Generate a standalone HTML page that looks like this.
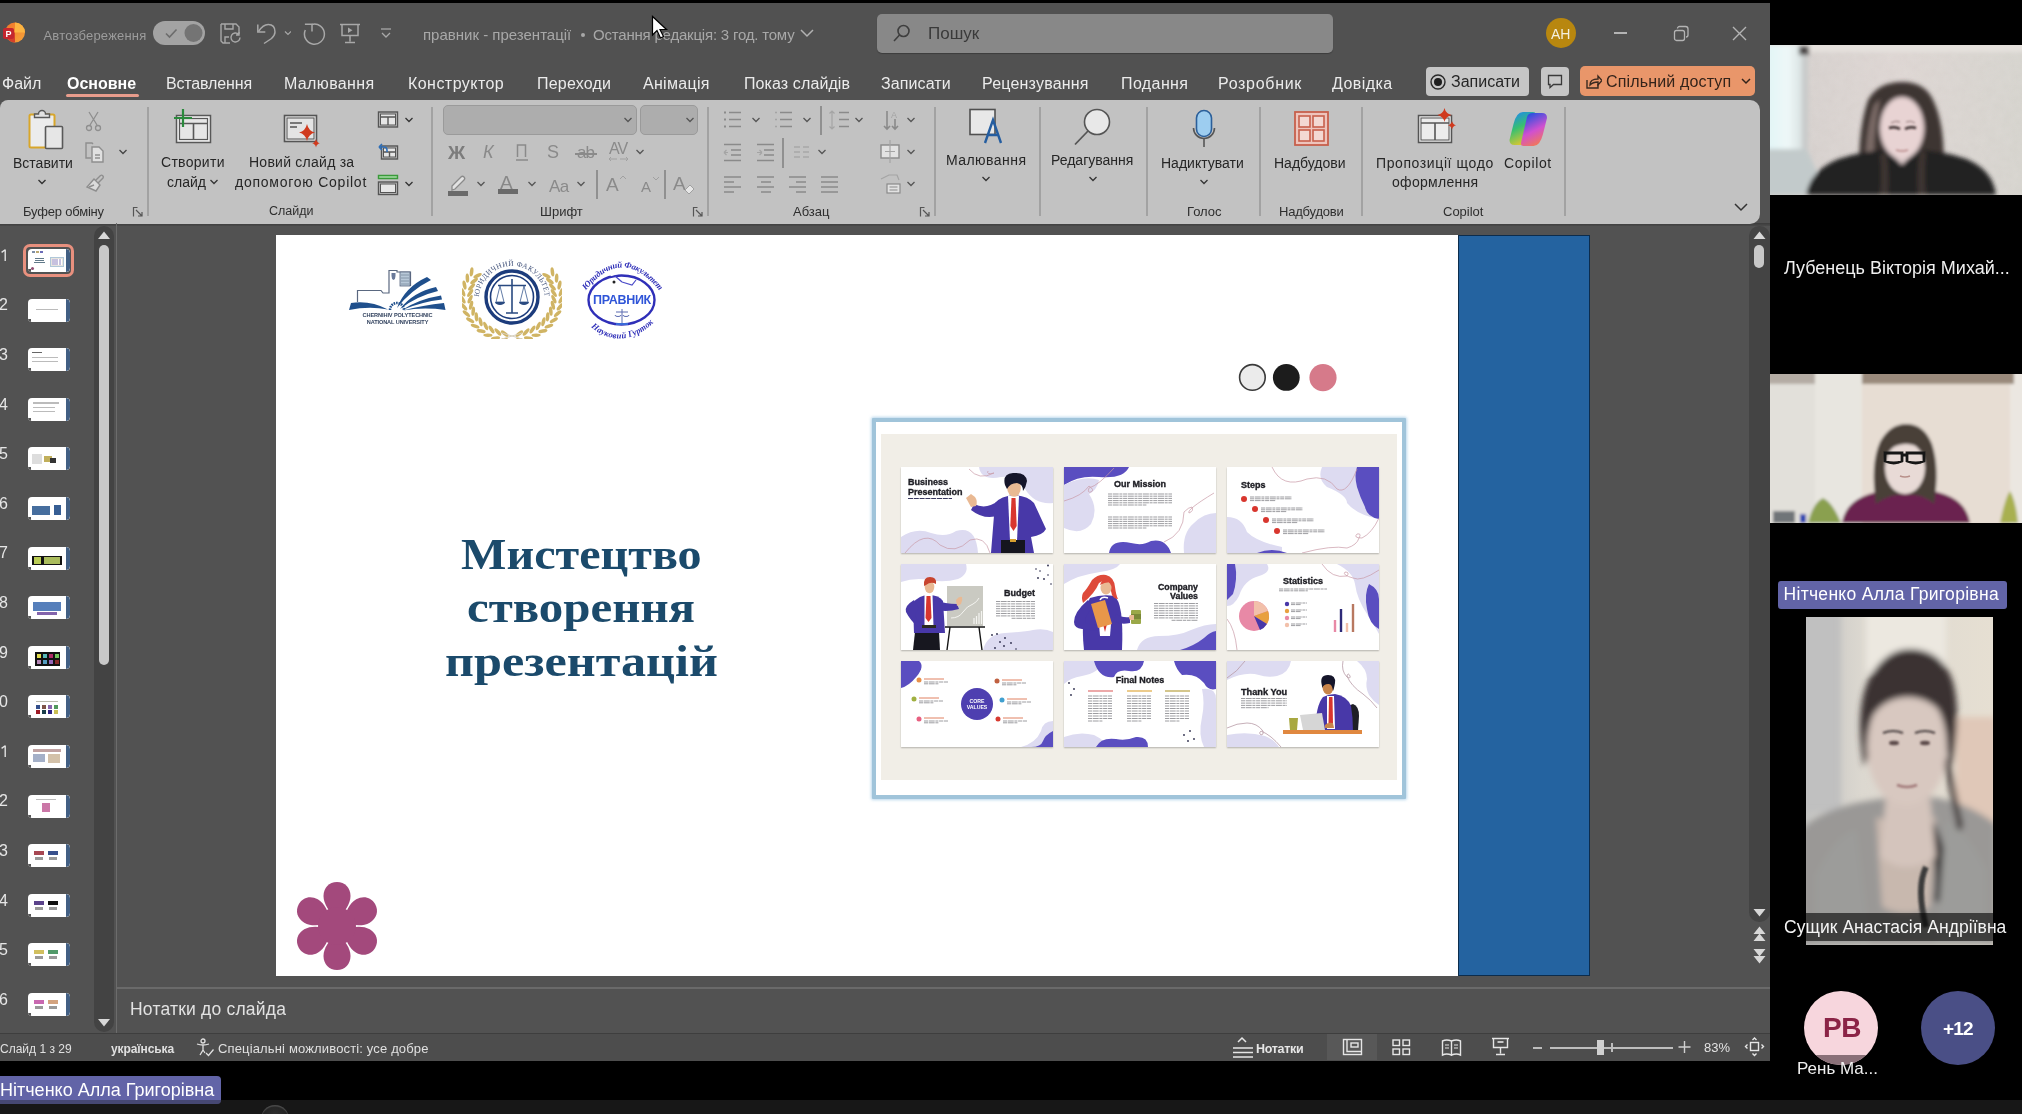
<!DOCTYPE html>
<html><head><meta charset="utf-8">
<style>
*{box-sizing:border-box;margin:0;padding:0}
html,body{width:2022px;height:1114px;overflow:hidden;background:#000;font-family:"Liberation Sans",sans-serif;position:relative}
.a{position:absolute}
.t{position:absolute;white-space:nowrap;line-height:1}
.tab{position:absolute;top:76px;font-size:16px;color:#ebebeb;white-space:nowrap;line-height:1}
.rl{position:absolute;font-size:14px;color:#262626;white-space:nowrap;line-height:1}
.gl{position:absolute;top:205px;font-size:13px;color:#2e2e2e;white-space:nowrap;line-height:1}
.sep{position:absolute;top:107px;width:2px;height:109px;background:#a2a2a2}
</style></head>
<body>
<div id="root" style="position:absolute;left:0;top:0;width:2022px;height:1114px;overflow:hidden;will-change:transform">
<!-- window background -->
<div class="a" style="left:0;top:3px;width:1770px;height:1058px;background:#525252"></div>
<!-- title bar -->
<div class="a" style="left:0;top:3px;width:1770px;height:97px;background:#515151"></div>
<!-- ribbon -->
<div class="a" style="left:0;top:223px;width:1770px;height:3px;background:linear-gradient(#3c3c3c,#4a4a4a)"></div>
<div class="a" style="left:0;top:100px;width:1760px;height:124px;background:#c2c2c2;border-radius:8px 10px 10px 0"></div>


<!-- ===== TITLE BAR CONTENT ===== -->
<svg class="a" style="left:2px;top:21px" width="24" height="23" viewBox="0 0 24 23">
  <defs><linearGradient id="pg" x1="0" y1="0" x2="1" y2="1"><stop offset="0" stop-color="#f0742a"/><stop offset="1" stop-color="#f7a43a"/></linearGradient></defs>
  <circle cx="13" cy="11.5" r="10" fill="url(#pg)"/>
  <path d="M13 1.5 A10 10 0 0 1 23 11.5 L13 11.5Z" fill="#fcb441"/>
  <path d="M3 11.5 A10 10 0 0 0 13 21.5 L13 11.5Z" fill="#d5402a"/>
  <rect x="1" y="7" width="11" height="11" rx="2" fill="#c4262e"/>
  <text x="6.5" y="16" font-family="Liberation Sans" font-weight="700" font-size="9" fill="#fff" text-anchor="middle">P</text>
</svg>
<div class="t" style="left:43.5px;top:28.5px;font-size:13px;color:#9c9c9c;letter-spacing:0.2px">Автозбереження</div>
<div class="a" style="left:153px;top:21px;width:52px;height:24px;border-radius:12px;background:#a3a3a3"></div>
<svg class="a" style="left:153px;top:21px" width="52" height="24"><path d="M13 12.5 l3.5 3.5 l7 -7.5" fill="none" stroke="#6c6c6c" stroke-width="1.6"/><circle cx="40.5" cy="12" r="9" fill="#747474"/></svg>
<svg class="a" style="left:218px;top:22px" width="26" height="24" viewBox="0 0 26 24" fill="none" stroke="#a8a8a8" stroke-width="1.4">
  <path d="M3 2 h15 l3 3 v7 M3 2 v17 l2 2 h7"/><path d="M7 2 v5 h8 v-5"/><path d="M7 21 v-6 h4"/>
  <path d="M22 15.5 a4.5 4.5 0 1 1 -1.3 -3.2 M21 10 v3 h-3"/>
</svg>
<svg class="a" style="left:255px;top:22px" width="36" height="24" fill="none" stroke="#a8a8a8" stroke-width="1.5">
  <path d="M2.8 2.5 v7.4 h7.5"/><path d="M3.5 9.5 Q8 2.5 13.3 2.5 Q20 2.5 20 9.9 Q20 13 16.5 16.5 L9 21.5"/>
  <path d="M30 9.5 l3 3 l3 -3" stroke-width="1.2"/>
</svg>
<svg class="a" style="left:301px;top:21px" width="26" height="26" fill="none" stroke="#a8a8a8" stroke-width="1.5">
  <path d="M3.9 3.3 H11 V10.4"/><path d="M11 3.4 A10 10 0 1 1 4.3 9"/>
</svg>
<svg class="a" style="left:338px;top:22px" width="24" height="24" fill="none" stroke="#a8a8a8" stroke-width="1.5">
  <path d="M2 2.5 h20 M4 2.5 v11 h16 v-11"/><path d="M12 13.5 v6 M7 20.5 h10"/><path d="M10 5.5 v5.5 l4.5 -2.75z" fill="#a8a8a8" stroke="none"/>
</svg>
<svg class="a" style="left:379px;top:26px" width="14" height="14" fill="none" stroke="#a8a8a8" stroke-width="1.3"><path d="M2 3 h10"/><path d="M3 7 l4 4 l4 -4"/></svg>
<div class="t" style="left:423px;top:27px;font-size:15px;color:#a8a8a8">правник - презентації</div>
<div class="a" style="left:580.5px;top:32.5px;width:4px;height:4px;border-radius:50%;background:#a8a8a8"></div>
<div class="t" style="left:593px;top:27px;font-size:15px;color:#a8a8a8;letter-spacing:-0.2px">Остання редакція: 3 год. тому</div>
<svg class="a" style="left:799px;top:27px" width="16" height="12" fill="none" stroke="#b2b2b2" stroke-width="1.5"><path d="M2 3 l6 6 l6 -6"/></svg>
<!-- search -->
<div class="a" style="left:877px;top:14px;width:456px;height:39px;border-radius:5px;background:#888888;box-shadow:0 1px 1px rgba(0,0,0,.25)"></div>
<svg class="a" style="left:891px;top:22px" width="22" height="22" fill="none" stroke="#3e3e3e" stroke-width="1.6"><circle cx="12.5" cy="9" r="5.5"/><path d="M8.5 13 l-5.5 6"/></svg>
<div class="t" style="left:928px;top:25px;font-size:17px;color:#3a3a3a">Пошук</div>
<!-- avatar + window buttons -->
<div class="a" style="left:1546px;top:18px;width:30px;height:30px;border-radius:50%;background:#b8870f"></div>
<div class="t" style="left:1551px;top:27px;font-size:14px;color:#f4f0e0">AH</div>
<div class="a" style="left:1614px;top:32px;width:13px;height:1.5px;background:#b4b4b4"></div>
<svg class="a" style="left:1672px;top:25px" width="18" height="17" fill="none" stroke="#b4b4b4" stroke-width="1.3"><rect x="2.5" y="5.5" width="10" height="10" rx="2"/><path d="M5.5 3.5 a2 2 0 0 1 2 -2 h6 a2.5 2.5 0 0 1 2.5 2.5 v6 a2 2 0 0 1 -2 2"/></svg>
<svg class="a" style="left:1731px;top:25px" width="17" height="17" fill="none" stroke="#b4b4b4" stroke-width="1.4"><path d="M2 2 L15 15 M15 2 L2 15"/></svg>

<!-- ===== TABS ===== -->
<div class="tab" style="left:2px">Файл</div>
<div class="tab" style="left:67px;font-weight:700;color:#fff">Основне</div>
<div class="a" style="left:66px;top:94px;width:73px;height:3px;border-radius:1.5px;background:#e89c8c"></div>
<div class="tab" style="left:166px;letter-spacing:-0.15px">Вставлення</div>
<div class="tab" style="left:284px;letter-spacing:0.35px">Малювання</div>
<div class="tab" style="left:408px;letter-spacing:0.45px">Конструктор</div>
<div class="tab" style="left:537px;letter-spacing:0.2px">Переходи</div>
<div class="tab" style="left:643px;letter-spacing:0.3px">Анімація</div>
<div class="tab" style="left:744px;letter-spacing:0.1px">Показ слайдів</div>
<div class="tab" style="left:881px;letter-spacing:0.1px">Записати</div>
<div class="tab" style="left:982px;letter-spacing:0.2px">Рецензування</div>
<div class="tab" style="left:1121px;letter-spacing:0.4px">Подання</div>
<div class="tab" style="left:1218px;letter-spacing:0.7px">Розробник</div>
<div class="tab" style="left:1332px;letter-spacing:0.45px">Довідка</div>
<!-- record / comment / share -->
<div class="a" style="left:1426px;top:67px;width:103px;height:29px;border-radius:4px;background:#c6c6c6"></div>
<svg class="a" style="left:1429px;top:73px" width="18" height="18"><circle cx="9" cy="9" r="7" fill="none" stroke="#2a2a2a" stroke-width="1.4"/><circle cx="9" cy="9" r="4" fill="#1e1e1e"/></svg>
<div class="t" style="left:1451px;top:74px;font-size:16px;color:#262626">Записати</div>
<div class="a" style="left:1541px;top:67px;width:28px;height:29px;border-radius:4px;background:#c6c6c6"></div>
<svg class="a" style="left:1546px;top:73px" width="18" height="18" fill="none" stroke="#3a3a3a" stroke-width="1.3"><path d="M2.5 2.5 h13 v9 h-8 l-3.5 3 v-3 h-1.5z"/></svg>
<div class="a" style="left:1580px;top:66px;width:175px;height:30px;border-radius:5px;background:#e9966a"></div>
<svg class="a" style="left:1584px;top:72px" width="18" height="18" fill="none" stroke="#3a2a20" stroke-width="1.4"><path d="M3 8 v8 h11 v-4"/><path d="M6 13 c0 -5 3 -6 8 -6 v-3 l4 4.5 l-4 4.5 v-3 c-4 0 -6 1 -8 3z"/></svg>
<div class="t" style="left:1606px;top:74px;font-size:16px;color:#33231a;letter-spacing:0.15px">Спільний доступ</div>
<svg class="a" style="left:1740px;top:76px" width="12" height="10" fill="none" stroke="#33231a" stroke-width="1.5"><path d="M2 3 l4 4 l4 -4"/></svg>


<!-- ===== RIBBON CONTENT ===== -->
<!-- clipboard -->
<svg class="a" style="left:26px;top:108px" width="40" height="42">
  <rect x="3.5" y="6.5" width="25" height="33" rx="1.5" fill="#ececec" stroke="#d8a62a" stroke-width="2"/>
  <path d="M8.5 9.5 v-3.5 h4 a3.5 3.5 0 0 1 7 0 h4 v3.5z" fill="#e2e2e2" stroke="#5a5a5a" stroke-width="1.4"/>
  <rect x="19.5" y="18.5" width="17" height="22" rx="1" fill="#e6e6e6" stroke="#595959" stroke-width="1.6"/>
</svg>
<div class="rl" style="left:13px;top:156px">Вставити</div>
<svg class="a" style="left:37px;top:178px" width="10" height="8" fill="none" stroke="#333" stroke-width="1.4"><path d="M1.5 2 l3.5 3.5 l3.5 -3.5"/></svg>
<svg class="a" style="left:85px;top:110px" width="17" height="22" fill="none" stroke="#8e8e8e" stroke-width="1.3">
  <path d="M4 2 L12 15 M13 2 L5 15"/><circle cx="4" cy="18" r="2.5"/><circle cx="13" cy="18" r="2.5"/>
</svg>
<svg class="a" style="left:83px;top:141px" width="23" height="23" fill="none" stroke="#8e8e8e" stroke-width="1.4">
  <path d="M8 17 h-5 v-15 h6 l1 1"/><path d="M9 6 h7 l4 4 v11 h-11z" fill="#e0e0e0"/><path d="M12 14 h5 M12 17 h5"/>
</svg>
<svg class="a" style="left:118px;top:148px" width="10" height="8" fill="none" stroke="#444" stroke-width="1.3"><path d="M1.5 2 l3.5 3.5 l3.5 -3.5"/></svg>
<svg class="a" style="left:84px;top:173px" width="22" height="21" fill="none" stroke="#8e8e8e" stroke-width="1.4">
  <path d="M14 10 l5 -5 a1.8 1.8 0 0 0 -2.5 -2.5 l-5 5"/><path d="M10 6 l6 6 l-4 6 l-9 -4z" fill="#dcdcdc"/><path d="M5 14 l5 -2"/>
</svg>
<div class="gl" style="left:23px;letter-spacing:-0.2px">Буфер обміну</div>
<svg class="a" style="left:132px;top:206px" width="12" height="12" fill="none" stroke="#555" stroke-width="1.2"><path d="M1.5 10.5 v-9 h4 M1.5 1.5 h0"/><path d="M4 4 l6 6 M10 6 v4 h-4"/></svg>
<div class="sep" style="left:147px"></div>

<!-- slides -->
<svg class="a" style="left:172px;top:108px" width="42" height="37">
  <rect x="4.5" y="7.5" width="34" height="27" fill="#f0f0f0" stroke="#585858" stroke-width="1.5"/>
  <rect x="7.5" y="10.5" width="28" height="21" fill="#e6e6e6" stroke="#585858" stroke-width="1.2"/>
  <path d="M7.5 15.5 h28 M21.5 15.5 v16" stroke="#585858" stroke-width="1.6"/>
  <path d="M11 1 v18 M2 10 h18" stroke="#2a8a3c" stroke-width="2.2"/>
</svg>
<div class="rl" style="left:161px;top:155px;letter-spacing:0.3px">Створити</div>
<div class="rl" style="left:167px;top:175px">слайд</div>
<svg class="a" style="left:209px;top:178px" width="10" height="8" fill="none" stroke="#333" stroke-width="1.3"><path d="M1.5 2 l3.5 3.5 l3.5 -3.5"/></svg>
<svg class="a" style="left:282px;top:113px" width="40" height="35">
  <rect x="2.5" y="2.5" width="32" height="26" fill="#e4e4e4" stroke="#555" stroke-width="1.6"/>
  <rect x="5" y="5" width="27" height="21" fill="none" stroke="#555" stroke-width="1"/>
  <path d="M8 10 h12 M8 14 h7" stroke="#555" stroke-width="1.6"/>
  <path d="M25 11 q1.5 7 8 8.5 q-6.5 1.5 -8 8.5 q-1.5 -7 -8 -8.5 q6.5 -1.5 8 -8.5z" fill="#d03a1e"/>
  <path d="M34 26 q.7 3.5 3.8 4.2 q-3.1 .7 -3.8 4.2 q-.7 -3.5 -3.8 -4.2 q3.1 -.7 3.8 -4.2z" fill="#d03a1e"/>
</svg>
<div class="rl" style="left:249px;top:155px;letter-spacing:0.25px">Новий слайд за</div>
<div class="rl" style="left:235px;top:175px;letter-spacing:0.75px">допомогою Copilot</div>
<svg class="a" style="left:376px;top:110px" width="24" height="19" fill="none" stroke="#555" stroke-width="1.4">
  <rect x="2.5" y="2" width="19" height="15"/><rect x="4.5" y="4" width="15" height="11" fill="#e6e6e6" stroke-width="1"/><path d="M4.5 7 h15 M12 7 v8"/>
</svg>
<svg class="a" style="left:404px;top:116px" width="10" height="8" fill="none" stroke="#333" stroke-width="1.3"><path d="M1.5 2 l3.5 3.5 l3.5 -3.5"/></svg>
<svg class="a" style="left:376px;top:142px" width="24" height="19" fill="none" stroke-width="1.4">
  <rect x="5.5" y="4" width="16" height="13" stroke="#555"/><rect x="7.5" y="6" width="12" height="9" fill="#e6e6e6" stroke="#555" stroke-width="1"/><path d="M7.5 10 h12 M13.5 10 v5" stroke="#555"/>
  <path d="M3 5 l3 -3 M3 5 l3 3 M3 5 h5 a3 3 0 0 1 3 3 v2" stroke="#2f6fb8" stroke-width="1.6"/>
</svg>
<svg class="a" style="left:376px;top:173px" width="24" height="23" fill="none" stroke-width="1.4">
  <path d="M2.5 2.5 h19 v3 h-19z" fill="#a8dca8" stroke="#3a9a3a"/>
  <rect x="2.5" y="9" width="19" height="12.5" stroke="#555"/><rect x="4.5" y="11" width="15" height="8.5" fill="#e6e6e6" stroke="#555" stroke-width="1"/>
</svg>
<svg class="a" style="left:404px;top:180px" width="10" height="8" fill="none" stroke="#333" stroke-width="1.3"><path d="M1.5 2 l3.5 3.5 l3.5 -3.5"/></svg>
<div class="gl" style="left:269px;font-size:12.5px">Слайди</div>
<div class="sep" style="left:431px"></div>

<!-- font -->
<div class="a" style="left:443px;top:105px;width:194px;height:30px;border-radius:5px;background:#adadad;border:1px solid #9a9a9a"></div>
<svg class="a" style="left:623px;top:116px" width="10" height="8" fill="none" stroke="#555" stroke-width="1.3"><path d="M1.5 2 l3.5 3.5 l3.5 -3.5"/></svg>
<div class="a" style="left:640px;top:105px;width:58px;height:30px;border-radius:5px;background:#adadad;border:1px solid #9a9a9a"></div>
<svg class="a" style="left:685px;top:116px" width="10" height="8" fill="none" stroke="#555" stroke-width="1.3"><path d="M1.5 2 l3.5 3.5 l3.5 -3.5"/></svg>
<div class="t" style="left:448px;top:143px;font-size:19px;font-weight:700;color:#7c7c7c">Ж</div>
<div class="t" style="left:483px;top:143px;font-size:18px;font-style:italic;color:#8a8a8a">К</div>
<svg class="a" style="left:514px;top:142px" width="16" height="20" fill="none" stroke="#8a8a8a" stroke-width="1.5"><path d="M3.5 15 v-12 h8 v12"/><path d="M2 18 h12"/></svg>
<div class="t" style="left:547px;top:143px;font-size:18px;color:#8a8a8a">S</div>
<div class="t" style="left:577px;top:144px;font-size:17px;color:#8a8a8a;letter-spacing:-1px">ab</div>
<div class="a" style="left:575px;top:153px;width:22px;height:1.5px;background:#8a8a8a"></div>
<div class="t" style="left:609px;top:141px;font-size:16px;color:#8a8a8a;letter-spacing:-1px">AV</div>
<svg class="a" style="left:608px;top:156px" width="22" height="6" fill="none" stroke="#a0a0a0" stroke-width="1"><path d="M1 3 h8 M1 3 l2 -2 M1 3 l2 2 M12 3 h8 M20 3 l-2 -2 M20 3 l-2 2"/></svg>
<svg class="a" style="left:635px;top:148px" width="10" height="8" fill="none" stroke="#555" stroke-width="1.3"><path d="M1.5 2 l3.5 3.5 l3.5 -3.5"/></svg>
<svg class="a" style="left:447px;top:174px" width="22" height="22">
  <path d="M5 12 l9 -9 a2 2 0 0 1 3 3 l-9 9 l-3 1z" fill="#e2e2e2" stroke="#8a8a8a" stroke-width="1.3"/>
  <rect x="1" y="17" width="20" height="5" fill="#6a6a6a"/>
</svg>
<svg class="a" style="left:476px;top:180px" width="10" height="8" fill="none" stroke="#555" stroke-width="1.3"><path d="M1.5 2 l3.5 3.5 l3.5 -3.5"/></svg>
<div class="t" style="left:500px;top:173px;font-size:19px;color:#888">A</div>
<div class="a" style="left:498px;top:189px;width:20px;height:5px;background:#6a6a6a"></div>
<svg class="a" style="left:527px;top:180px" width="10" height="8" fill="none" stroke="#555" stroke-width="1.3"><path d="M1.5 2 l3.5 3.5 l3.5 -3.5"/></svg>
<div class="t" style="left:549px;top:178px;font-size:17px;color:#8a8a8a;letter-spacing:-0.5px">Aa</div>
<svg class="a" style="left:576px;top:180px" width="10" height="8" fill="none" stroke="#555" stroke-width="1.3"><path d="M1.5 2 l3.5 3.5 l3.5 -3.5"/></svg>
<div class="a" style="left:596px;top:170px;width:1.5px;height:29px;background:#909090"></div>
<div class="t" style="left:606px;top:175px;font-size:19px;color:#8a8a8a">A</div>
<svg class="a" style="left:619px;top:175px" width="8" height="5" fill="none" stroke="#a0a0a0" stroke-width="1"><path d="M1 4 l3 -3 l3 3"/></svg>
<div class="t" style="left:641px;top:179px;font-size:15px;color:#8a8a8a">A</div>
<svg class="a" style="left:652px;top:176px" width="8" height="5" fill="none" stroke="#a0a0a0" stroke-width="1"><path d="M1 1 l3 3 l3 -3"/></svg>
<div class="a" style="left:664px;top:170px;width:1.5px;height:29px;background:#909090"></div>
<div class="t" style="left:673px;top:174px;font-size:19px;color:#8a8a8a">A</div>
<svg class="a" style="left:683px;top:183px" width="12" height="12"><path d="M2 7 l5 -5 l4 4 l-5 5z" fill="#e6e6e6" stroke="#a0a0a0" stroke-width="1"/></svg>
<div class="gl" style="left:540px">Шрифт</div>
<svg class="a" style="left:692px;top:206px" width="12" height="12" fill="none" stroke="#555" stroke-width="1.2"><path d="M1.5 10.5 v-9 h4"/><path d="M4 4 l6 6 M10 6 v4 h-4"/></svg>
<div class="sep" style="left:707px"></div>

<!-- paragraph -->
<svg class="a" style="left:721px;top:109px" width="200" height="86" fill="none" stroke="#8a8a8a" stroke-width="1.6">
  <!-- bullets -->
  <path d="M8 3.5 h12 M8 10.5 h12 M8 17.5 h12"/><path d="M3 3.5 h2 M3 10.5 h2 M3 17.5 h2" stroke-width="2"/>
  <!-- numbering -->
  <path d="M59 3.5 h12 M59 10.5 h12 M59 17.5 h12"/><path d="M54 3.5 h2 M54 10.5 h2 M54 17.5 h2" stroke-width="1.6" stroke="#a4a4a4"/>
  <!-- line spacing -->
  <path d="M118 3.5 h10 M118 10.5 h10 M118 17.5 h10"/><path d="M111 2 v18 M108.5 4.5 l2.5 -2.5 l2.5 2.5 M108.5 17.5 l2.5 2.5 l2.5 -2.5" stroke="#a4a4a4" stroke-width="1.2"/>
  <!-- text direction -->
  <path d="M166 2 v18 M163 17 l3 3 l3 -3 M174 10 v10 M171 17 l3 3 l3 -3"/><text x="170" y="9" font-size="9" fill="#a4a4a4" stroke="none" font-family="Liberation Sans">A</text>
  <!-- row 2 -->
  <path d="M3 35.5 h17 M10 41 h10 M10 46 h10 M3 51.5 h17"/><path d="M7 43.5 h-4 M3 43.5 l2.5 -2.5 M3 43.5 l2.5 2.5" stroke="#a4a4a4" stroke-width="1.2"/>
  <path d="M36 35.5 h17 M43 41 h10 M43 46 h10 M36 51.5 h17"/><path d="M36 43.5 h5 M41 43.5 l-2.5 -2.5 M41 43.5 l-2.5 2.5" stroke="#a4a4a4" stroke-width="1.2"/>
  <path d="M73 38 h6 M82 38 h6 M73 43 h6 M82 43 h6 M73 48 h6 M82 48 h6" stroke="#a8a8a8" stroke-width="1.4"/>
  <rect x="160" y="36" width="18" height="13" fill="#e2e2e2" stroke="#8a8a8a" stroke-width="1.4"/><path d="M169 31 v23 M164 42.5 h10" stroke="#a4a4a4" stroke-width="1.2"/>
  <!-- row 3 -->
  <path d="M3 68 h17 M3 73 h10 M3 78 h17 M3 83 h10"/>
  <path d="M36 68 h17 M40 73 h10 M36 78 h17 M40 83 h10"/>
  <path d="M68 68 h17 M75 73 h10 M68 78 h17 M75 83 h10"/>
  <path d="M100 68 h17 M100 73 h17 M100 78 h17 M100 83 h17"/>
  <path d="M160 70 l8 -4 h8 l2 5" stroke="#a4a4a4" stroke-width="1.2"/><rect x="166" y="75" width="13" height="9" fill="#e2e2e2" stroke="#8a8a8a" stroke-width="1.2"/><path d="M168.5 78 h8 M168.5 81 h8" stroke-width="1"/>
</svg>
<svg class="a" style="left:751px;top:116px" width="10" height="8" fill="none" stroke="#555" stroke-width="1.3"><path d="M1.5 2 l3.5 3.5 l3.5 -3.5"/></svg>
<svg class="a" style="left:802px;top:116px" width="10" height="8" fill="none" stroke="#555" stroke-width="1.3"><path d="M1.5 2 l3.5 3.5 l3.5 -3.5"/></svg>
<div class="a" style="left:820px;top:106px;width:1.5px;height:29px;background:#909090"></div>
<svg class="a" style="left:854px;top:116px" width="10" height="8" fill="none" stroke="#555" stroke-width="1.3"><path d="M1.5 2 l3.5 3.5 l3.5 -3.5"/></svg>
<svg class="a" style="left:906px;top:116px" width="10" height="8" fill="none" stroke="#555" stroke-width="1.3"><path d="M1.5 2 l3.5 3.5 l3.5 -3.5"/></svg>
<div class="a" style="left:782px;top:138px;width:1.5px;height:30px;background:#909090"></div>
<svg class="a" style="left:817px;top:148px" width="10" height="8" fill="none" stroke="#555" stroke-width="1.3"><path d="M1.5 2 l3.5 3.5 l3.5 -3.5"/></svg>
<svg class="a" style="left:906px;top:148px" width="10" height="8" fill="none" stroke="#555" stroke-width="1.3"><path d="M1.5 2 l3.5 3.5 l3.5 -3.5"/></svg>
<svg class="a" style="left:906px;top:180px" width="10" height="8" fill="none" stroke="#555" stroke-width="1.3"><path d="M1.5 2 l3.5 3.5 l3.5 -3.5"/></svg>
<div class="gl" style="left:793px">Абзац</div>
<svg class="a" style="left:919px;top:206px" width="12" height="12" fill="none" stroke="#555" stroke-width="1.2"><path d="M1.5 10.5 v-9 h4"/><path d="M4 4 l6 6 M10 6 v4 h-4"/></svg>
<div class="sep" style="left:934px"></div>

<!-- drawing -->
<svg class="a" style="left:967px;top:107px" width="40" height="40">
  <rect x="3" y="2.5" width="25" height="25" fill="#e8e8e8" stroke="#505050" stroke-width="1.6"/>
  <path d="M18 36 L26 13 L34 36 M21 28 h10" fill="none" stroke="#245da0" stroke-width="2.4"/>
</svg>
<div class="rl" style="left:946px;top:153px;letter-spacing:0.45px">Малювання</div>
<svg class="a" style="left:981px;top:175px" width="10" height="8" fill="none" stroke="#333" stroke-width="1.3"><path d="M1.5 2 l3.5 3.5 l3.5 -3.5"/></svg>
<div class="sep" style="left:1039px"></div>
<!-- editing -->
<svg class="a" style="left:1072px;top:107px" width="42" height="40">
  <circle cx="25" cy="15" r="12.5" fill="#e8e8e8" stroke="#555" stroke-width="1.6"/>
  <path d="M16 24 L3 37.5" stroke="#555" stroke-width="1.8"/>
</svg>
<div class="rl" style="left:1051px;top:153px">Редагування</div>
<svg class="a" style="left:1088px;top:175px" width="10" height="8" fill="none" stroke="#333" stroke-width="1.3"><path d="M1.5 2 l3.5 3.5 l3.5 -3.5"/></svg>
<div class="sep" style="left:1146px"></div>
<!-- voice -->
<svg class="a" style="left:1190px;top:108px" width="28" height="42">
  <rect x="6.5" y="2.5" width="15" height="26" rx="7.5" fill="#9dcdf0" stroke="#2b5f9a" stroke-width="1.6"/>
  <path d="M3.5 20 a10.5 10.5 0 0 0 21 0" fill="none" stroke="#555" stroke-width="1.6"/>
  <path d="M14 31 v8" stroke="#555" stroke-width="1.6"/>
</svg>
<div class="rl" style="left:1161px;top:156px">Надиктувати</div>
<svg class="a" style="left:1199px;top:178px" width="10" height="8" fill="none" stroke="#333" stroke-width="1.3"><path d="M1.5 2 l3.5 3.5 l3.5 -3.5"/></svg>
<div class="gl" style="left:1187px">Голос</div>
<div class="sep" style="left:1259px"></div>
<!-- add-ins -->
<svg class="a" style="left:1292px;top:109px" width="40" height="40">
  <rect x="3" y="3" width="33" height="33" fill="#eec4bc" stroke="#c7604c" stroke-width="1.8"/>
  <rect x="7" y="7" width="11" height="11" fill="#f3d8d2" stroke="#c7604c" stroke-width="1.6"/>
  <rect x="21" y="7" width="11" height="11" fill="#f3d8d2" stroke="#c7604c" stroke-width="1.6"/>
  <rect x="7" y="21" width="11" height="11" fill="#f3d8d2" stroke="#c7604c" stroke-width="1.6"/>
  <rect x="21" y="21" width="11" height="11" fill="#f3d8d2" stroke="#c7604c" stroke-width="1.6"/>
</svg>
<div class="rl" style="left:1274px;top:156px">Надбудови</div>
<div class="gl" style="left:1279px;letter-spacing:-0.2px">Надбудови</div>
<div class="sep" style="left:1361px"></div>
<!-- designer -->
<svg class="a" style="left:1416px;top:107px" width="42" height="38">
  <rect x="2.5" y="8.5" width="33" height="27" fill="#ececec" stroke="#555" stroke-width="1.5"/>
  <rect x="5" y="11" width="28" height="22" fill="none" stroke="#555" stroke-width="1"/>
  <path d="M5 16 h28 M19 16 v17" stroke="#555" stroke-width="1.6"/>
  <path d="M28.5 1 q1.2 5.5 7 7 q-5.8 1.5 -7 7 q-1.2 -5.5 -7 -7 q5.8 -1.5 7 -7z" fill="#d03a1e"/>
  <path d="M36 14 q.8 3.5 4 4.2 q-3.2 .7 -4 4.2 q-.8 -3.5 -4 -4.2 q3.2 -.7 4 -4.2z" fill="#d03a1e"/>
</svg>
<div class="rl" style="left:1376px;top:156px;letter-spacing:0.6px">Пропозиції щодо</div>
<div class="rl" style="left:1392px;top:175px;letter-spacing:0.3px">оформлення</div>
<!-- copilot -->
<svg class="a" style="left:1508px;top:110px" width="40" height="38" viewBox="0 0 40 38">
  <defs>
    <linearGradient id="cg1" x1="0.2" y1="0" x2="0.6" y2="1"><stop offset="0" stop-color="#1e88f0"/><stop offset=".45" stop-color="#38c070"/><stop offset="1" stop-color="#f0c828"/></linearGradient>
    <linearGradient id="cg2" x1="0.4" y1="0" x2="0.8" y2="1"><stop offset="0" stop-color="#2850e0"/><stop offset=".5" stop-color="#d050d0"/><stop offset="1" stop-color="#f88040"/></linearGradient>
  </defs>
  <path d="M15 2 h10 q3 0 2.5 3 l-6 26 q-1 4 -5 4 h-10 q-5 0 -5 -5 l4 -16 q3 -12 9.5 -12z" fill="url(#cg1)"/>
  <path d="M25 3 h9 q5 0 5 5 l-4 16 q-3 12 -9.5 12 h-10 q-3 0 -2.5 -3 l6 -26 q1 -4 6 -4z" fill="url(#cg2)"/>
</svg>
<div class="rl" style="left:1504px;top:156px;letter-spacing:0.6px">Copilot</div>
<div class="gl" style="left:1443px">Copilot</div>
<div class="sep" style="left:1564px"></div>
<svg class="a" style="left:1733px;top:201px" width="16" height="12" fill="none" stroke="#333" stroke-width="1.5"><path d="M2 3 l6 6 l6 -6"/></svg>

<!-- thumbnails panel scroll track -->
<div class="a" style="left:94px;top:226px;width:20px;height:806px;background:#434343;border-radius:10px"></div>
<div class="a" style="left:115.5px;top:223px;width:1.6px;height:810px;background:#6c6c6c"></div>

<!-- slide -->
<div class="a" style="left:276px;top:235px;width:1183px;height:741px;background:#fff"></div>
<div class="a" style="left:1458px;top:235px;width:132px;height:741px;background:#2463a0;border:1px solid #0c2c4c"></div>


<!-- ===== SLIDE CONTENT ===== -->
<!-- logo 1 -->
<svg class="a" style="left:345px;top:262px" width="106" height="66" viewBox="0 0 106 66">
  <path d="M12.5 40 V28.5 H36 L38 31 H44 V8.5 H52 V10 H65.5 V24" fill="none" stroke="#5a6880" stroke-width="1.2"/>
  <rect x="55" y="10" width="10" height="14" fill="#b8c8d8" stroke="#5a6880" stroke-width=".8"/>
  <path d="M56 13 h8 M56 16 h8 M56 19 h8 M56 22 h8" stroke="#7a8aa0" stroke-width=".8"/>
  <path d="M46.5 11 h4 v3 q0 3 -2 4 q-2 -1 -2 -4z" fill="#6a7a9a"/>
  <path d="M4 48 L6 41 Q25 38 43 47.5 Q24 44 4 48z" fill="#1f4f8c"/>
  <path d="M52 46 Q60 25 82 15 L86 18 Q66 28 52 46z" fill="#1f4f8c"/>
  <path d="M55 47 Q68 30 91 25 L93 29 Q72 34 55 47z" fill="#1f4f8c"/>
  <path d="M57 48 Q74 37 96 33.5 L97 37.5 Q76 40 57 48z" fill="#1f4f8c"/>
  <path d="M58 48.5 Q78 43 99 41 L100.5 48 Q78 45 58 48.5z" fill="#1f4f8c"/>
  <path d="M45 48 a7 7 0 0 1 14 0" fill="none" stroke="#1f4f8c" stroke-width="2.6" stroke-dasharray="1.6 .9"/>
  <text x="52.5" y="55" text-anchor="middle" font-family="Liberation Sans" font-weight="700" font-size="5.6" fill="#33435f" letter-spacing="-.1">CHERNIHIV POLYTECHNIC</text>
  <text x="52.5" y="62" text-anchor="middle" font-family="Liberation Sans" font-weight="700" font-size="5.6" fill="#33435f" letter-spacing="-.1">NATIONAL UNIVERSITY</text>
</svg>
<!-- logo 2 -->
<svg class="a" style="left:462px;top:255px" width="100" height="84" viewBox="0 0 100 84">
  <defs><path id="arc2" d="M17 44 A33 33 0 0 1 83 44"/></defs>
  <g fill="#d0b464">
    <g id="lfl"><ellipse cx="41.4" cy="85.0" rx="1.8" ry="4.6" transform="rotate(72 41.4 85.0)"/><ellipse cx="42.7" cy="78.6" rx="1.8" ry="4.6" transform="rotate(128 42.7 78.6)"/><ellipse cx="33.5" cy="83.2" rx="1.8" ry="4.6" transform="rotate(82 33.5 83.2)"/><ellipse cx="35.9" cy="77.0" rx="1.8" ry="4.6" transform="rotate(138 35.9 77.0)"/><ellipse cx="25.9" cy="80.2" rx="1.8" ry="4.6" transform="rotate(91 25.9 80.2)"/><ellipse cx="29.5" cy="74.5" rx="1.8" ry="4.6" transform="rotate(147 29.5 74.5)"/><ellipse cx="19.1" cy="76.1" rx="1.8" ry="4.6" transform="rotate(101 19.1 76.1)"/><ellipse cx="23.7" cy="71.0" rx="1.8" ry="4.6" transform="rotate(157 23.7 71.0)"/><ellipse cx="13.1" cy="71.1" rx="1.8" ry="4.6" transform="rotate(110 13.1 71.1)"/><ellipse cx="18.6" cy="66.7" rx="1.8" ry="4.6" transform="rotate(166 18.6 66.7)"/><ellipse cx="8.2" cy="65.2" rx="1.8" ry="4.6" transform="rotate(120 8.2 65.2)"/><ellipse cx="14.4" cy="61.8" rx="1.8" ry="4.6" transform="rotate(176 14.4 61.8)"/><ellipse cx="4.4" cy="58.7" rx="1.8" ry="4.6" transform="rotate(130 4.4 58.7)"/><ellipse cx="11.2" cy="56.2" rx="1.8" ry="4.6" transform="rotate(186 11.2 56.2)"/><ellipse cx="1.9" cy="51.8" rx="1.8" ry="4.6" transform="rotate(139 1.9 51.8)"/><ellipse cx="9.1" cy="50.3" rx="1.8" ry="4.6" transform="rotate(195 9.1 50.3)"/><ellipse cx="0.7" cy="44.5" rx="1.8" ry="4.6" transform="rotate(149 0.7 44.5)"/><ellipse cx="8.1" cy="44.2" rx="1.8" ry="4.6" transform="rotate(205 8.1 44.2)"/><ellipse cx="0.9" cy="37.2" rx="1.8" ry="4.6" transform="rotate(158 0.9 37.2)"/><ellipse cx="8.2" cy="38.0" rx="1.8" ry="4.6" transform="rotate(214 8.2 38.0)"/><ellipse cx="2.5" cy="30.1" rx="1.8" ry="4.6" transform="rotate(168 2.5 30.1)"/><ellipse cx="9.6" cy="31.9" rx="1.8" ry="4.6" transform="rotate(224 9.6 31.9)"/><ellipse cx="5.4" cy="23.2" rx="1.8" ry="4.6" transform="rotate(177 5.4 23.2)"/><ellipse cx="12.1" cy="26.0" rx="1.8" ry="4.6" transform="rotate(233 12.1 26.0)"/><ellipse cx="9.6" cy="16.9" rx="1.8" ry="4.6" transform="rotate(187 9.6 16.9)"/><ellipse cx="15.6" cy="20.7" rx="1.8" ry="4.6" transform="rotate(243 15.6 20.7)"/></g>
    <use href="#lfl" transform="translate(100 0) scale(-1 1)"/>
  </g>
  <path d="M40 78 L60 84 M60 78 L40 84" stroke="#d8d0c0" stroke-width="1"/>
  <text font-family="Liberation Serif" font-size="7.5" fill="#4a5a80" letter-spacing=".3"><textPath href="#arc2" startOffset="50%" text-anchor="middle">ЮРИДИЧНИЙ ФАКУЛЬТЕТ</textPath></text>
  <circle cx="50" cy="42" r="26" fill="#fff" stroke="#1c3c7c" stroke-width="3.4"/>
  <circle cx="50" cy="42" r="21.5" fill="none" stroke="#1c3c7c" stroke-width="1.6"/>
  <path d="M50 24 V58 M44 58 H56 M36 30.5 H64" stroke="#2a4a80" stroke-width="1.6"/>
  <path d="M38 31 L34 47 H42z M62 31 L58 47 H66z" fill="none" stroke="#3a5a90" stroke-width=".8"/>
  <path d="M33 47 a5 3 0 0 0 10 0z M57 47 a5 3 0 0 0 10 0z" fill="#2a4a80"/>
</svg>
<!-- logo 3 -->
<svg class="a" style="left:580px;top:258px" width="84" height="86" viewBox="0 0 84 86">
  <ellipse cx="41.5" cy="42" rx="33" ry="24.5" fill="none" stroke="#2f2fb8" stroke-width="2.4"/>
  <path d="M30 16 q10 -4 20 -3" stroke="#fff" stroke-width="5"/>
  <path d="M35 18 L42 24 M42 24 l10 3 l4 -5" fill="none" stroke="#4a4ac8" stroke-width="1.2"/>
  <circle cx="34" cy="24" r="1.5" fill="#222"/>
  <text x="42" y="46" text-anchor="middle" font-family="Liberation Sans" font-weight="700" font-size="12.5" fill="#2f55d8" letter-spacing="-.3">ПРАВНИК</text>
  <path d="M42 51 v14 M36 54 h12 M35 57 a3 1.5 0 0 0 6 0 M43 57 a3 1.5 0 0 0 6 0" fill="none" stroke="#5a6ab0" stroke-width="1"/>
  <path d="M36 66 h12" stroke="#3a6ad8" stroke-width="2"/>
  <defs><path id="ta3" d="M7 31 Q42 -12 78 31"/><path id="ba3" d="M10 62 Q41 92 74 58"/></defs><text font-family="Liberation Serif" font-style="italic" font-weight="700" font-size="8.6" fill="#2f2fb8" letter-spacing="-.2"><textPath href="#ta3" startOffset="50%" text-anchor="middle">Юридичний Факультет</textPath></text>
  <text font-family="Liberation Serif" font-style="italic" font-weight="700" font-size="8.6" fill="#2f2fb8" letter-spacing="-.2" dy="4.5"><textPath href="#ba3" startOffset="50%" text-anchor="middle">Науковий Гурток</textPath></text>
</svg>
<!-- title -->
<div class="t" style="left:460.5px;top:533px;font-family:'Liberation Serif',serif;font-weight:700;font-size:44px;color:#1b4a6b;transform-origin:0 0;transform:scaleX(1.094)">Мистецтво</div>
<div class="t" style="left:467px;top:586.4px;font-family:'Liberation Serif',serif;font-weight:700;font-size:44px;color:#1b4a6b;transform-origin:0 0;transform:scaleX(1.112)">створення</div>
<div class="t" style="left:444.5px;top:639.7px;font-family:'Liberation Serif',serif;font-weight:700;font-size:44px;color:#1b4a6b;transform-origin:0 0;transform:scaleX(1.142)">презентацій</div>
<!-- color dots -->
<svg class="a" style="left:1236px;top:362px" width="104" height="32">
  <circle cx="16.4" cy="15.4" r="12.8" fill="#ebebeb" stroke="#3a3a3a" stroke-width="1.6"/>
  <circle cx="50.3" cy="15.4" r="13.4" fill="#1c1c1c"/>
  <circle cx="87" cy="15.7" r="13.6" fill="#d67a8a"/>
</svg>
<!-- image frame -->
<div class="a" style="left:872px;top:418px;width:534px;height:381px;border:4.5px solid #a0c4da;border-radius:1px;background:#fff;box-shadow:0 0 3px 1px rgba(140,190,225,.6)"></div>
<div class="a" style="left:881px;top:434px;width:516px;height:346px;background:#f1eee7"></div>
<svg class="a" style="left:901px;top:467px;box-shadow:0 1px 1.5px rgba(0,0,0,.25)" width="152" height="86" viewBox="0 0 152 86"><rect width="152" height="86" fill="#fff"/>
<path d="M78 0 q2 14 22 10 q18 -2 24 12 q10 16 28 14 V0z" fill="#dddbf1"/>
<path d="M0 70 q15 -10 30 -4 q15 5 25 -2 q20 -6 22 22 H0z" fill="#dddbf1"/>
<path d="M68 2 q10 12 25 4 q-8 2 -6 -2 M4 86 q20 -25 35 -8 q15 10 30 -5 q15 -5 20 13" fill="none" stroke="#c99aa6" stroke-width="0.7"/>
<text x="7" y="18" font-family="Liberation Sans" font-weight="700" font-size="9" fill="#1e1e24" stroke="#1e1e24" stroke-width=".35">Business</text>
<text x="7" y="27.5" font-family="Liberation Sans" font-weight="700" font-size="9" fill="#1e1e24" stroke="#1e1e24" stroke-width=".35">Presentation</text>
<path d="M7 31.5 h44" stroke="#3a3a60" stroke-width="1" stroke-dasharray="5 .8"/>
<path d="M90 86 l4 -50 q6 -7 19 -8 q14 1 20 8 l12 26 q-3 6 -15 8 l3 16z" fill="#4838a8"/>
<path d="M97 34 q-12 9 -24 3 l-3 6 q14 11 29 5z" fill="#4838a8"/>
<path d="M65 31 l5 -4 l4 3 q3 4 1 9 l-5 1z" fill="#e9b993"/>
<path d="M107 29 h11 l-2 45 h-7z" fill="#fff"/>
<path d="M110.5 31 h4 l1.2 28 l-3.2 5 l-3.2 -5z" fill="#d8362e"/>
<ellipse cx="113" cy="21" rx="6.8" ry="8.8" fill="#e9b993"/>
<path d="M104 18 q-3 -11 8 -12 q13 -1 14 8 q-1 6 -4 10 q0 -7 -6 -8 q-7 0 -10 6z" fill="#15152a"/>
<path d="M100 86 v-13 h24 v13z" fill="#15151f"/><rect x="109" y="72" width="6" height="3" fill="#d8a030"/></svg>
<svg class="a" style="left:1064px;top:467px;box-shadow:0 1px 1.5px rgba(0,0,0,.25)" width="152" height="86" viewBox="0 0 152 86"><rect width="152" height="86" fill="#fff"/>
<path d="M0 0 h65 q-5 12 -30 10 q-20 -2 -35 8z" fill="#5a4ec0"/>
<path d="M0 18 q20 -10 35 -5 q-2 10 -10 14 q10 15 2 30 q-10 12 -27 4z" fill="#dddbf1"/>
<path d="M120 86 q-2 -20 10 -30 q10 -10 22 -10 V86z" fill="#dddbf1"/>
<path d="M45 86 q2 -14 22 -10 q12 3 20 -2 q15 -3 20 12z" fill="#5a4ec0"/>
<path d="M0 34 q18 -5 25 -15 q6 4 2 6 q-4 1 -2 -4 q10 -3 25 -20 M100 75 q20 -8 20 -30 q5 -5 8 -5 q2 4 -3 6 q-3 -3 25 -20" fill="none" stroke="#c99aa6" stroke-width="0.7"/>
<text x="76" y="20" text-anchor="middle" font-family="Liberation Sans" font-weight="700" font-size="9" fill="#1e1e24" stroke="#1e1e24" stroke-width=".35">Our Mission</text>
<path d="M44 27.0 h64.0" stroke="#5a5a62" stroke-width="0.6" stroke-dasharray="4 .7 6 .7 3 .7"/><path d="M44 29.2 h64.0" stroke="#5a5a62" stroke-width="0.6" stroke-dasharray="4 .7 6 .7 3 .7"/><path d="M44 31.4 h64.0" stroke="#5a5a62" stroke-width="0.6" stroke-dasharray="4 .7 6 .7 3 .7"/><path d="M44 33.6 h64.0" stroke="#5a5a62" stroke-width="0.6" stroke-dasharray="4 .7 6 .7 3 .7"/><path d="M44 35.8 h64.0" stroke="#5a5a62" stroke-width="0.6" stroke-dasharray="4 .7 6 .7 3 .7"/><path d="M44 38.0 h38.4" stroke="#5a5a62" stroke-width="0.6" stroke-dasharray="4 .7 6 .7 3 .7"/><path d="M44 50.0 h64.0" stroke="#5a5a62" stroke-width="0.6" stroke-dasharray="4 .7 6 .7 3 .7"/><path d="M44 52.2 h64.0" stroke="#5a5a62" stroke-width="0.6" stroke-dasharray="4 .7 6 .7 3 .7"/><path d="M44 54.4 h64.0" stroke="#5a5a62" stroke-width="0.6" stroke-dasharray="4 .7 6 .7 3 .7"/><path d="M44 56.6 h64.0" stroke="#5a5a62" stroke-width="0.6" stroke-dasharray="4 .7 6 .7 3 .7"/><path d="M44 58.8 h64.0" stroke="#5a5a62" stroke-width="0.6" stroke-dasharray="4 .7 6 .7 3 .7"/><path d="M44 61.0 h38.4" stroke="#5a5a62" stroke-width="0.6" stroke-dasharray="4 .7 6 .7 3 .7"/></svg>
<svg class="a" style="left:1227px;top:467px;box-shadow:0 1px 1.5px rgba(0,0,0,.25)" width="152" height="86" viewBox="0 0 152 86"><rect width="152" height="86" fill="#fff"/>
<path d="M95 0 q-5 12 5 20 q20 8 20 16 q10 12 32 16 V0z" fill="#dddbf1"/>
<path d="M130 0 h22 v52 q-12 -2 -14 -12 q-5 -10 -8 -20 q-3 -12 0 -20z" fill="#5a4ec0"/>
<path d="M0 50 q15 0 20 15 q10 10 35 15 V86 H0z" fill="#dddbf1"/>
<path d="M30 86 q15 -6 30 0z" fill="#5a4ec0"/>
<path d="M45 0 q10 22 35 12 q20 -5 30 10 q10 6 20 -20 M75 86 q30 -8 45 -5 q10 -3 12 -10 q3 -5 -2 -4 q-4 4 5 4 q10 -5 17 -20" fill="none" stroke="#c99aa6" stroke-width="0.7"/>
<text x="14" y="21" font-family="Liberation Sans" font-weight="700" font-size="9" fill="#1e1e24" stroke="#1e1e24" stroke-width=".35">Steps</text>
<circle cx="17" cy="32" r="3" fill="#d8362e"/><circle cx="28" cy="42" r="3" fill="#d8362e"/><circle cx="39" cy="53" r="3" fill="#d8362e"/><circle cx="50" cy="64" r="3" fill="#d8362e"/>
<path d="M23 30.0 h42.0" stroke="#5a5a62" stroke-width="0.6" stroke-dasharray="4 .7 6 .7 3 .7"/><path d="M23 31.8 h42.0" stroke="#5a5a62" stroke-width="0.6" stroke-dasharray="4 .7 6 .7 3 .7"/><path d="M23 33.6 h25.2" stroke="#5a5a62" stroke-width="0.6" stroke-dasharray="4 .7 6 .7 3 .7"/><path d="M34 41.0 h42.0" stroke="#5a5a62" stroke-width="0.6" stroke-dasharray="4 .7 6 .7 3 .7"/><path d="M34 42.8 h42.0" stroke="#5a5a62" stroke-width="0.6" stroke-dasharray="4 .7 6 .7 3 .7"/><path d="M34 44.6 h25.2" stroke="#5a5a62" stroke-width="0.6" stroke-dasharray="4 .7 6 .7 3 .7"/><path d="M45 52.0 h42.0" stroke="#5a5a62" stroke-width="0.6" stroke-dasharray="4 .7 6 .7 3 .7"/><path d="M45 53.8 h42.0" stroke="#5a5a62" stroke-width="0.6" stroke-dasharray="4 .7 6 .7 3 .7"/><path d="M45 55.6 h25.2" stroke="#5a5a62" stroke-width="0.6" stroke-dasharray="4 .7 6 .7 3 .7"/><path d="M56 63.0 h42.0" stroke="#5a5a62" stroke-width="0.6" stroke-dasharray="4 .7 6 .7 3 .7"/><path d="M56 64.8 h42.0" stroke="#5a5a62" stroke-width="0.6" stroke-dasharray="4 .7 6 .7 3 .7"/><path d="M56 66.6 h25.2" stroke="#5a5a62" stroke-width="0.6" stroke-dasharray="4 .7 6 .7 3 .7"/></svg>
<svg class="a" style="left:901px;top:564px;box-shadow:0 1px 1.5px rgba(0,0,0,.25)" width="152" height="86" viewBox="0 0 152 86"><rect width="152" height="86" fill="#fff"/>
<path d="M0 0 h65 q3 10 -8 15 q-14 4 -28 1 q-15 -3 -29 2z" fill="#dddbf1"/>
<path d="M82 86 q4 -16 22 -17 q18 -1 28 -3 q12 -2 20 2 V86z" fill="#dddbf1"/>
<rect x="46" y="22" width="36" height="40" fill="#cacac2"/>
<path d="M50 54 q8 0 12 -6 q4 -6 10 -8 q4 -2 6 -6" fill="none" stroke="#f4f4f0" stroke-width="1"/>
<path d="M73 60 v-6 M75.5 60 v-8 M78 60 v-11 M80.5 60 v-13" stroke="#f4f4f0" stroke-width="1.2"/>
<path d="M44 63 h40 M49 63 l-3 23 M78 63 l3 23" stroke="#141414" stroke-width="1.4"/>
<path d="M12 86 l2 -18 h24 l1 18z" fill="#17171f"/>
<path d="M13 69 l-1 -30 q6 -8 16 -8 q10 0 14 6 l2 32z" fill="#4838a8"/>
<path d="M34 36 q10 4 22 4 l2 5 q-14 4 -26 0z" fill="#4838a8"/>
<path d="M13 36 q-10 6 -8 12 q4 8 12 15 l3 -3 q-6 -6 -6 -10 l4 -6z" fill="#4838a8"/>
<path d="M55 36 q3 -4 6 -3 q1 3 -1 7 l-4 2z" fill="#e9b993"/>
<path d="M23.5 31 h8 l1 31 h-9z" fill="#fff"/>
<path d="M25.5 32 h4 l1 22 l-3 4 l-3 -4z" fill="#d8362e"/>
<rect x="21" y="61" width="14" height="3" fill="#2a2a20"/>
<ellipse cx="28.5" cy="23" rx="4.8" ry="6.2" fill="#e9b993"/>
<path d="M23 22 q-1 -9 6 -9 q7 0 6 7 q-5 -3 -10 1z" fill="#c8442e"/>
<text x="134" y="31.5" text-anchor="end" font-family="Liberation Sans" font-weight="700" font-size="9" fill="#1e1e24" stroke="#1e1e24" stroke-width=".35">Budget</text>
<path d="M95.0 37.5 h39.0" stroke="#5a5a62" stroke-width="0.6" stroke-dasharray="4 .7 6 .7 3 .7"/><path d="M95.0 39.9 h39.0" stroke="#5a5a62" stroke-width="0.6" stroke-dasharray="4 .7 6 .7 3 .7"/><path d="M95.0 42.3 h39.0" stroke="#5a5a62" stroke-width="0.6" stroke-dasharray="4 .7 6 .7 3 .7"/><path d="M95.0 44.7 h39.0" stroke="#5a5a62" stroke-width="0.6" stroke-dasharray="4 .7 6 .7 3 .7"/><path d="M95.0 47.1 h39.0" stroke="#5a5a62" stroke-width="0.6" stroke-dasharray="4 .7 6 .7 3 .7"/><path d="M95.0 49.5 h39.0" stroke="#5a5a62" stroke-width="0.6" stroke-dasharray="4 .7 6 .7 3 .7"/><path d="M95.0 51.9 h39.0" stroke="#5a5a62" stroke-width="0.6" stroke-dasharray="4 .7 6 .7 3 .7"/><path d="M110.6 54.3 h23.4" stroke="#5a5a62" stroke-width="0.6" stroke-dasharray="4 .7 6 .7 3 .7"/>
<g fill="#2a2a4a"><circle cx="147" cy="1.5" r=".9"/><circle cx="135" cy="5" r=".8"/><circle cx="139" cy="7" r=".8"/><circle cx="147" cy="11" r=".8"/><circle cx="137" cy="14" r=".9"/><circle cx="143" cy="15" r=".9"/><circle cx="150" cy="20" r=".8"/>
<circle cx="91" cy="71" r=".9"/><circle cx="96" cy="70" r=".9"/><circle cx="104" cy="74" r=".9"/><circle cx="99" cy="78" r=".9"/><circle cx="103" cy="82" r=".9"/><circle cx="110" cy="79" r=".9"/><circle cx="94" cy="84" r=".9"/><circle cx="115" cy="85" r=".8"/></g></svg>
<svg class="a" style="left:1064px;top:564px;box-shadow:0 1px 1.5px rgba(0,0,0,.25)" width="152" height="86" viewBox="0 0 152 86"><rect width="152" height="86" fill="#fff"/>
<path d="M0 0 h56 q-4 6 -20 8 q-22 3 -36 12z" fill="#dddbf1"/>
<path d="M73 86 q4 -14 22 -14 q20 0 32 -6 q14 -6 25 -6 V86z" fill="#dddbf1"/>
<path d="M116 86 q14 -4 24 -12 q6 -6 12 -7 V86z" fill="#5a4ec0"/>
<path d="M22 86 l1 -14 h32 l1 14z" fill="#17171f"/>
<path d="M20 86 q-4 -36 6 -52 q12 -4 24 -2 q10 6 8 54z" fill="#4838a8"/>
<path d="M24 36 q-14 12 -14 22 q0 6 8 7 l16 2 l1 -5 l-14 -3 q0 -8 8 -16z" fill="#4838a8"/>
<path d="M52 50 q6 4 14 3 v6 q-10 2 -16 -2z" fill="#4838a8"/>
<path d="M35 60 h12 l-1 12 h-10z" fill="#fff"/><path d="M39 60 h4 l-2 8z" fill="#d8362e"/>
<path d="M27 40 l14 -4 l7 24 l-14 4z" fill="#e8974a"/>
<path d="M36 36 q2 -4 8 -2" stroke="#fff" stroke-width="1.5" fill="none"/>
<path d="M28 16 q6 -6 14 -5 q8 2 9 12 q1 8 3 12 q-4 0 -6 -4 l-3 -12 q-4 -4 -10 0 q-4 10 -16 20 q-2 -6 0 -10 q4 -4 9 -13z" fill="#de4a3a"/>
<ellipse cx="42" cy="24" rx="5.5" ry="6.5" fill="#e9b993"/>
<path d="M36 21 q2 -7 8 -6 q4 1 5 4 q-6 -2 -13 2z" fill="#de4a3a"/>
<rect x="67" y="46" width="10" height="14" rx="1" fill="#9aa848"/><rect x="67" y="50" width="10" height="5" fill="#7a8838"/>
<path d="M66 56 q-2 -3 0 -5 h4 v5z" fill="#e9b993"/>
<text x="134" y="25.5" text-anchor="end" font-family="Liberation Sans" font-weight="700" font-size="8.8" fill="#1e1e24" stroke="#1e1e24" stroke-width=".35">Company</text>
<text x="134" y="35" text-anchor="end" font-family="Liberation Sans" font-weight="700" font-size="8.8" fill="#1e1e24" stroke="#1e1e24" stroke-width=".35">Values</text>
<path d="M90.0 39.5 h44.0" stroke="#5a5a62" stroke-width="0.6" stroke-dasharray="4 .7 6 .7 3 .7"/><path d="M90.0 41.9 h44.0" stroke="#5a5a62" stroke-width="0.6" stroke-dasharray="4 .7 6 .7 3 .7"/><path d="M90.0 44.3 h44.0" stroke="#5a5a62" stroke-width="0.6" stroke-dasharray="4 .7 6 .7 3 .7"/><path d="M90.0 46.7 h44.0" stroke="#5a5a62" stroke-width="0.6" stroke-dasharray="4 .7 6 .7 3 .7"/><path d="M90.0 49.1 h44.0" stroke="#5a5a62" stroke-width="0.6" stroke-dasharray="4 .7 6 .7 3 .7"/><path d="M90.0 51.5 h44.0" stroke="#5a5a62" stroke-width="0.6" stroke-dasharray="4 .7 6 .7 3 .7"/><path d="M90.0 53.9 h44.0" stroke="#5a5a62" stroke-width="0.6" stroke-dasharray="4 .7 6 .7 3 .7"/><path d="M107.6 56.3 h26.4" stroke="#5a5a62" stroke-width="0.6" stroke-dasharray="4 .7 6 .7 3 .7"/></svg>
<svg class="a" style="left:1227px;top:564px;box-shadow:0 1px 1.5px rgba(0,0,0,.25)" width="152" height="86" viewBox="0 0 152 86"><rect width="152" height="86" fill="#fff"/>
<path d="M0 0 h40 q5 8 -8 12 q-15 4 -20 20 q-5 10 -12 10z" fill="#dddbf1"/>
<path d="M0 0 h8 q3 15 -2 30 l-6 6z" fill="#5a4ec0"/>
<path d="M110 0 h42 v70 q-5 -10 -12 -20 q-10 -15 -12 -30 q-2 -12 -18 -20z" fill="#dddbf1"/>
<path d="M142 20 q10 5 10 15 v30 q-10 -5 -12 -20 q-3 -15 2 -25z" fill="#5a4ec0"/>
<path d="M0 55 q8 10 10 31 M95 0 q10 15 25 12 q3 -4 -2 -4 q-3 3 8 6 q8 4 26 -8" fill="none" stroke="#c99aa6" stroke-width="0.7"/>
<text x="76" y="20" text-anchor="middle" font-family="Liberation Sans" font-weight="700" font-size="9" fill="#1e1e24" stroke="#1e1e24" stroke-width=".35">Statistics</text>
<path d="M52 25.0 h48.0" stroke="#5a5a62" stroke-width="0.6" stroke-dasharray="4 .7 6 .7 3 .7"/><path d="M52 26.8 h28.8" stroke="#5a5a62" stroke-width="0.6" stroke-dasharray="4 .7 6 .7 3 .7"/>
<circle cx="27" cy="52" r="15" fill="#e889a6"/>
<path d="M27 52 L27 37 A15 15 0 0 1 41 47z" fill="#f2c0aa"/>
<path d="M27 52 L41 47 A15 15 0 0 1 40 60z" fill="#e8a040"/>
<path d="M27 52 L40 60 A15 15 0 0 1 33 66z" fill="#4838a8"/>
<circle cx="60" cy="40" r="2.2" fill="#4838a8"/><circle cx="60" cy="47" r="2.2" fill="#e8a040"/><circle cx="60" cy="54" r="2.2" fill="#e889a6"/><circle cx="60" cy="61" r="2.2" fill="#f2c0aa"/>
<path d="M64 39.0 h16.0" stroke="#5a5a62" stroke-width="0.6" stroke-dasharray="4 .7 6 .7 3 .7"/><path d="M64 40.6 h9.6" stroke="#5a5a62" stroke-width="0.6" stroke-dasharray="4 .7 6 .7 3 .7"/><path d="M64 46.0 h16.0" stroke="#5a5a62" stroke-width="0.6" stroke-dasharray="4 .7 6 .7 3 .7"/><path d="M64 47.6 h9.6" stroke="#5a5a62" stroke-width="0.6" stroke-dasharray="4 .7 6 .7 3 .7"/><path d="M64 53.0 h16.0" stroke="#5a5a62" stroke-width="0.6" stroke-dasharray="4 .7 6 .7 3 .7"/><path d="M64 54.6 h9.6" stroke="#5a5a62" stroke-width="0.6" stroke-dasharray="4 .7 6 .7 3 .7"/><path d="M64 60.0 h16.0" stroke="#5a5a62" stroke-width="0.6" stroke-dasharray="4 .7 6 .7 3 .7"/><path d="M64 61.6 h9.6" stroke="#5a5a62" stroke-width="0.6" stroke-dasharray="4 .7 6 .7 3 .7"/>
<path d="M108 68 v-12" stroke-width="2.4" stroke="#e889a6"/><path d="M114 68 v-23" stroke="#2e2a78" stroke-width="2.4"/><path d="M120 68 v-9" stroke="#f2c0aa" stroke-width="2.4"/><path d="M126 68 v-28" stroke="#b87860" stroke-width="2.4"/></svg>
<svg class="a" style="left:901px;top:661px;box-shadow:0 1px 1.5px rgba(0,0,0,.25)" width="152" height="86" viewBox="0 0 152 86"><rect width="152" height="86" fill="#fff"/>
<path d="M0 0 h18 q6 5 -2 15 q-8 10 -16 12z" fill="#5a4ec0"/>
<path d="M152 60 q-10 0 -12 10 q-5 12 -20 16 h32z" fill="#dddbf1"/>
<path d="M152 70 q-8 4 -10 10 q-2 6 -12 6 h22z" fill="#5a4ec0"/>
<circle cx="76" cy="43" r="16" fill="#4e3fb0"/>
<text x="76" y="42" text-anchor="middle" font-family="Liberation Sans" font-weight="700" font-size="5.2" fill="#fff">CORE</text>
<text x="76" y="48" text-anchor="middle" font-family="Liberation Sans" font-weight="700" font-size="5.2" fill="#fff">VALUES</text>
<circle cx="18" cy="19" r="2.5" fill="#e8904a"/><circle cx="13" cy="38" r="2.5" fill="#a0b040"/><circle cx="18" cy="58" r="2.5" fill="#e86080"/>
<circle cx="96" cy="20" r="2.5" fill="#c06040"/><circle cx="101" cy="39" r="2.5" fill="#40a0d0"/><circle cx="97" cy="58" r="2.5" fill="#d83a30"/>
<path d="M23 18 h20 M18 37 h20 M23 57 h20 M101 19 h20 M106 38 h20 M102 57 h20" stroke="#e08060" stroke-width="1"/>
<path d="M23 21.0 h24.0" stroke="#5a5a62" stroke-width="0.6" stroke-dasharray="4 .7 6 .7 3 .7"/><path d="M23 22.8 h14.4" stroke="#5a5a62" stroke-width="0.6" stroke-dasharray="4 .7 6 .7 3 .7"/><path d="M18 40.0 h24.0" stroke="#5a5a62" stroke-width="0.6" stroke-dasharray="4 .7 6 .7 3 .7"/><path d="M18 41.8 h14.4" stroke="#5a5a62" stroke-width="0.6" stroke-dasharray="4 .7 6 .7 3 .7"/><path d="M23 60.0 h24.0" stroke="#5a5a62" stroke-width="0.6" stroke-dasharray="4 .7 6 .7 3 .7"/><path d="M23 61.8 h14.4" stroke="#5a5a62" stroke-width="0.6" stroke-dasharray="4 .7 6 .7 3 .7"/><path d="M101 22.0 h24.0" stroke="#5a5a62" stroke-width="0.6" stroke-dasharray="4 .7 6 .7 3 .7"/><path d="M101 23.8 h14.4" stroke="#5a5a62" stroke-width="0.6" stroke-dasharray="4 .7 6 .7 3 .7"/><path d="M106 41.0 h24.0" stroke="#5a5a62" stroke-width="0.6" stroke-dasharray="4 .7 6 .7 3 .7"/><path d="M106 42.8 h14.4" stroke="#5a5a62" stroke-width="0.6" stroke-dasharray="4 .7 6 .7 3 .7"/><path d="M102 60.0 h24.0" stroke="#5a5a62" stroke-width="0.6" stroke-dasharray="4 .7 6 .7 3 .7"/><path d="M102 61.8 h14.4" stroke="#5a5a62" stroke-width="0.6" stroke-dasharray="4 .7 6 .7 3 .7"/></svg>
<svg class="a" style="left:1064px;top:661px;box-shadow:0 1px 1.5px rgba(0,0,0,.25)" width="152" height="86" viewBox="0 0 152 86"><rect width="152" height="86" fill="#fff"/>
<path d="M0 0 h40 q-5 12 -22 15 q-12 2 -18 8z" fill="#dddbf1"/>
<path d="M30 0 h50 q-2 12 -15 10 q-12 -2 -15 6 q-15 2 -20 -16z" fill="#5a4ec0"/>
<path d="M110 0 h42 v28 q-8 2 -12 -6 q-8 -10 -22 -8 q-6 -6 -8 -14z" fill="#5a4ec0"/>
<path d="M138 28 q14 -2 14 10 v48 h-12 q-6 -12 -2 -30 q3 -14 0 -28z" fill="#dddbf1"/>
<path d="M0 76 q15 -6 30 -2 q10 5 15 12 H0z" fill="#dddbf1"/>
<path d="M32 86 q5 -10 20 -8 q10 2 20 -2 q12 -1 12 10z" fill="#5a4ec0"/>
<text x="76" y="22" text-anchor="middle" font-family="Liberation Sans" font-weight="700" font-size="9" fill="#1e1e24" stroke="#1e1e24" stroke-width=".35">Final Notes</text>
<path d="M24 30 h25" stroke="#e07070" stroke-width="1.2"/><path d="M63 30 h25" stroke="#e0a840" stroke-width="1.2"/><path d="M101 30 h25" stroke="#b8a040" stroke-width="1.2"/>
<path d="M24 35.0 h24.0" stroke="#5a5a62" stroke-width="0.6" stroke-dasharray="4 .7 6 .7 3 .7"/><path d="M24 37.5 h24.0" stroke="#5a5a62" stroke-width="0.6" stroke-dasharray="4 .7 6 .7 3 .7"/><path d="M24 40.0 h24.0" stroke="#5a5a62" stroke-width="0.6" stroke-dasharray="4 .7 6 .7 3 .7"/><path d="M24 42.5 h24.0" stroke="#5a5a62" stroke-width="0.6" stroke-dasharray="4 .7 6 .7 3 .7"/><path d="M24 45.0 h24.0" stroke="#5a5a62" stroke-width="0.6" stroke-dasharray="4 .7 6 .7 3 .7"/><path d="M24 47.5 h24.0" stroke="#5a5a62" stroke-width="0.6" stroke-dasharray="4 .7 6 .7 3 .7"/><path d="M24 50.0 h24.0" stroke="#5a5a62" stroke-width="0.6" stroke-dasharray="4 .7 6 .7 3 .7"/><path d="M24 52.5 h24.0" stroke="#5a5a62" stroke-width="0.6" stroke-dasharray="4 .7 6 .7 3 .7"/><path d="M24 55.0 h24.0" stroke="#5a5a62" stroke-width="0.6" stroke-dasharray="4 .7 6 .7 3 .7"/><path d="M24 57.5 h24.0" stroke="#5a5a62" stroke-width="0.6" stroke-dasharray="4 .7 6 .7 3 .7"/><path d="M24 60.0 h14.4" stroke="#5a5a62" stroke-width="0.6" stroke-dasharray="4 .7 6 .7 3 .7"/><path d="M63 35.0 h24.0" stroke="#5a5a62" stroke-width="0.6" stroke-dasharray="4 .7 6 .7 3 .7"/><path d="M63 37.5 h24.0" stroke="#5a5a62" stroke-width="0.6" stroke-dasharray="4 .7 6 .7 3 .7"/><path d="M63 40.0 h24.0" stroke="#5a5a62" stroke-width="0.6" stroke-dasharray="4 .7 6 .7 3 .7"/><path d="M63 42.5 h24.0" stroke="#5a5a62" stroke-width="0.6" stroke-dasharray="4 .7 6 .7 3 .7"/><path d="M63 45.0 h24.0" stroke="#5a5a62" stroke-width="0.6" stroke-dasharray="4 .7 6 .7 3 .7"/><path d="M63 47.5 h24.0" stroke="#5a5a62" stroke-width="0.6" stroke-dasharray="4 .7 6 .7 3 .7"/><path d="M63 50.0 h24.0" stroke="#5a5a62" stroke-width="0.6" stroke-dasharray="4 .7 6 .7 3 .7"/><path d="M63 52.5 h24.0" stroke="#5a5a62" stroke-width="0.6" stroke-dasharray="4 .7 6 .7 3 .7"/><path d="M63 55.0 h24.0" stroke="#5a5a62" stroke-width="0.6" stroke-dasharray="4 .7 6 .7 3 .7"/><path d="M63 57.5 h24.0" stroke="#5a5a62" stroke-width="0.6" stroke-dasharray="4 .7 6 .7 3 .7"/><path d="M63 60.0 h14.4" stroke="#5a5a62" stroke-width="0.6" stroke-dasharray="4 .7 6 .7 3 .7"/><path d="M101 35.0 h24.0" stroke="#5a5a62" stroke-width="0.6" stroke-dasharray="4 .7 6 .7 3 .7"/><path d="M101 37.5 h24.0" stroke="#5a5a62" stroke-width="0.6" stroke-dasharray="4 .7 6 .7 3 .7"/><path d="M101 40.0 h24.0" stroke="#5a5a62" stroke-width="0.6" stroke-dasharray="4 .7 6 .7 3 .7"/><path d="M101 42.5 h24.0" stroke="#5a5a62" stroke-width="0.6" stroke-dasharray="4 .7 6 .7 3 .7"/><path d="M101 45.0 h24.0" stroke="#5a5a62" stroke-width="0.6" stroke-dasharray="4 .7 6 .7 3 .7"/><path d="M101 47.5 h24.0" stroke="#5a5a62" stroke-width="0.6" stroke-dasharray="4 .7 6 .7 3 .7"/><path d="M101 50.0 h24.0" stroke="#5a5a62" stroke-width="0.6" stroke-dasharray="4 .7 6 .7 3 .7"/><path d="M101 52.5 h24.0" stroke="#5a5a62" stroke-width="0.6" stroke-dasharray="4 .7 6 .7 3 .7"/><path d="M101 55.0 h24.0" stroke="#5a5a62" stroke-width="0.6" stroke-dasharray="4 .7 6 .7 3 .7"/><path d="M101 57.5 h24.0" stroke="#5a5a62" stroke-width="0.6" stroke-dasharray="4 .7 6 .7 3 .7"/><path d="M101 60.0 h14.4" stroke="#5a5a62" stroke-width="0.6" stroke-dasharray="4 .7 6 .7 3 .7"/>
<g fill="#2a2a4a"><circle cx="5" cy="22" r=".9"/><circle cx="10" cy="28" r=".9"/><circle cx="7" cy="34" r=".9"/><circle cx="120" cy="74" r=".9"/><circle cx="126" cy="70" r=".9"/><circle cx="130" cy="78" r=".9"/><circle cx="124" cy="80" r=".9"/></g></svg>
<svg class="a" style="left:1227px;top:661px;box-shadow:0 1px 1.5px rgba(0,0,0,.25)" width="152" height="86" viewBox="0 0 152 86"><rect width="152" height="86" fill="#fff"/>
<path d="M0 0 h64 q-2 12 -14 15 q-10 2 -18 -1 q-14 -4 -32 5z" fill="#dddbf1"/>
<path d="M130 0 h22 v44 q-6 -4 -10 -10 q-4 -8 -2 -16 q0 -10 -10 -18z" fill="#dddbf1"/>
<path d="M0 74 q20 -4 38 1 q10 4 14 11 H0z" fill="#dddbf1"/>
<path d="M0 17 q10 -6 18 -17 M116 0 q-2 10 4 16 q4 2 3 -1 q-2 -4 -3 0 q4 10 16 18 q8 6 14 14 M0 67 q10 -5 20 -5 q10 0 16 8 q1 4 -2 4 q-3 -2 0 -4 q10 4 20 16" fill="none" stroke="#b89aa6" stroke-width=".8"/>
<text x="14" y="33.5" font-family="Liberation Sans" font-weight="700" font-size="9.2" fill="#1e1e24" stroke="#1e1e24" stroke-width=".35">Thank You</text>
<path d="M14.0 37.5 h46.0" stroke="#5a5a62" stroke-width="0.6" stroke-dasharray="4 .7 6 .7 3 .7"/><path d="M14.0 39.8 h46.0" stroke="#5a5a62" stroke-width="0.6" stroke-dasharray="4 .7 6 .7 3 .7"/><path d="M14.0 42.1 h46.0" stroke="#5a5a62" stroke-width="0.6" stroke-dasharray="4 .7 6 .7 3 .7"/><path d="M14.0 44.4 h46.0" stroke="#5a5a62" stroke-width="0.6" stroke-dasharray="4 .7 6 .7 3 .7"/><path d="M14.0 46.7 h27.6" stroke="#5a5a62" stroke-width="0.6" stroke-dasharray="4 .7 6 .7 3 .7"/>
<path d="M120 70 v-18 q0 -8 6 -9 q6 2 6 12 l-1 15z" fill="#1e1e26"/>
<path d="M88 70 q1 -26 8 -34 q6 -3 12 -3 q12 2 16 12 q2 12 2 25z" fill="#4838a8"/>
<path d="M100 35 h7 l1 33 h-8z" fill="#fff"/><path d="M102 36 h3.5 l.5 26 l-2.2 3 l-2.3 -3z" fill="#d8362e"/>
<path d="M98 64 q3 -3 8 -2 l1 5 h-9z" fill="#c8844a"/>
<ellipse cx="101" cy="26" rx="5.5" ry="7.5" fill="#c8844a"/>
<path d="M95 25 q-3 -11 6 -11 q8 0 7 8 q-1 6 -2 8 q-1 -8 -5 -7 q-4 0 -6 4z" fill="#15152a"/>
<path d="M73 54 l22 -2 l3 17 h-22z" fill="#d6d6d6"/>
<path d="M62 57 h9 l-1 12 h-7z" fill="#a8a840"/>
<rect x="56" y="69" width="79" height="4" fill="#e08840"/></svg>
<!-- flower -->
<svg class="a" style="left:293px;top:878px" width="88" height="96" viewBox="-44 -48 88 96">
  <g fill="#a3497c">
    <g id="pet"><path d="M0 -44 C8 -44 13.5 -38 13.5 -30 C13.5 -22 8 -15 0 -6 C-8 -15 -13.5 -22 -13.5 -30 C-13.5 -38 -8 -44 0 -44z"/></g>
    <use href="#pet" transform="rotate(60)"/><use href="#pet" transform="rotate(120)"/><use href="#pet" transform="rotate(180)"/><use href="#pet" transform="rotate(240)"/><use href="#pet" transform="rotate(300)"/>
    <circle r="19"/>
  </g>
</svg>

<!-- right scrollbar -->
<div class="a" style="left:1749px;top:226px;width:21px;height:696px;background:#444;border-radius:10px"></div>

<!-- notes separator -->
<div class="a" style="left:117px;top:987px;width:1653px;height:2px;background:#6a6a6a"></div>
<!-- status bar -->
<div class="a" style="left:0;top:1033px;width:1770px;height:28px;background:#4d4d4d;border-top:1px solid #3e3e3e"></div>


<!-- ===== THUMBNAILS ===== -->
<svg class="a" style="left:0;top:248.5px" width="9" height="13" fill="none" stroke="#e6e6e6" stroke-width="1.35"><path d="M5.2 0.6 V12 M5.2 0.8 L1.6 3.4"/></svg>
<div class="a" style="left:28px;top:249.0px;width:42px;height:23px;border-radius:4px;background:#fff;overflow:hidden;filter:saturate(.75) blur(.25px)"><div class="a" style="left:4px;top:1.5px;width:3px;height:2px;background:#7a90b0"></div><div class="a" style="left:8px;top:1.5px;width:3px;height:2.5px;background:#c0a860"></div><div class="a" style="left:12px;top:1.5px;width:3px;height:2.5px;background:#6a6ad0"></div><div class="a" style="left:7px;top:9px;width:9px;height:1.2px;background:#5a7a90"></div><div class="a" style="left:7px;top:11px;width:9px;height:1.2px;background:#5a7a90"></div><div class="a" style="left:6px;top:13px;width:11px;height:1.2px;background:#5a7a90"></div><div class="a" style="left:22px;top:7.5px;width:14px;height:10px;background:#e8e4dc;border:.6px solid #a8c8e0"></div><div class="a" style="left:24px;top:9.5px;width:10px;height:6px;background:repeating-linear-gradient(90deg,#c8c0e8 0 2.6px,#fff 2.6px 3.4px)"></div><div class="a" style="left:3px;top:18px;width:3px;height:3px;border-radius:50%;background:#a04878"></div><div class="a" style="right:0;top:0;width:4.5px;height:23px;background:#3a6090;border-radius:0 4px 4px 0"></div><div class="a" style="left:0;bottom:0;width:3px;height:3px;background:#555"></div></div>
<div class="t" style="left:-2px;width:10px;text-align:right;top:297.3px;font-size:16px;color:#e6e6e6">2</div>
<div class="a" style="left:28px;top:298.6px;width:42px;height:23px;border-radius:4px;background:#fff;overflow:hidden;filter:saturate(.75) blur(.25px)"><div class="a" style="left:8px;top:10px;width:22px;height:1px;background:#bbb"></div><div class="a" style="right:0;top:0;width:4.5px;height:23px;background:#3a6090;border-radius:0 4px 4px 0"></div><div class="a" style="left:0;bottom:0;width:3px;height:3px;background:#555"></div></div>
<div class="t" style="left:-2px;width:10px;text-align:right;top:346.9px;font-size:16px;color:#e6e6e6">3</div>
<div class="a" style="left:28px;top:348.2px;width:42px;height:23px;border-radius:4px;background:#fff;overflow:hidden;filter:saturate(.75) blur(.25px)"><div class="a" style="left:4px;top:4px;width:10px;height:1px;background:#666"></div><div class="a" style="left:4px;top:9px;width:26px;height:1px;background:#bbb"></div><div class="a" style="left:4px;top:13px;width:26px;height:1px;background:#bbb"></div><div class="a" style="right:0;top:0;width:4.5px;height:23px;background:#3a6090;border-radius:0 4px 4px 0"></div><div class="a" style="left:0;bottom:0;width:3px;height:3px;background:#555"></div></div>
<div class="t" style="left:-2px;width:10px;text-align:right;top:396.5px;font-size:16px;color:#e6e6e6">4</div>
<div class="a" style="left:28px;top:397.8px;width:42px;height:23px;border-radius:4px;background:#fff;overflow:hidden;filter:saturate(.75) blur(.25px)"><div class="a" style="left:5px;top:4px;width:26px;height:2px;background:#bbb"></div><div class="a" style="left:5px;top:9px;width:22px;height:1px;background:#bbb"></div><div class="a" style="left:5px;top:13px;width:22px;height:1px;background:#bbb"></div><div class="a" style="right:0;top:0;width:4.5px;height:23px;background:#3a6090;border-radius:0 4px 4px 0"></div><div class="a" style="left:0;bottom:0;width:3px;height:3px;background:#555"></div></div>
<div class="t" style="left:-2px;width:10px;text-align:right;top:446.1px;font-size:16px;color:#e6e6e6">5</div>
<div class="a" style="left:28px;top:447.4px;width:42px;height:23px;border-radius:4px;background:#fff;overflow:hidden;filter:saturate(.75) blur(.25px)"><div class="a" style="left:4px;top:7px;width:10px;height:10px;background:#ddd"></div><div class="a" style="left:16px;top:9px;width:8px;height:6px;background:#c8b040"></div><div class="a" style="left:22px;top:11px;width:6px;height:5px;background:#333"></div><div class="a" style="right:0;top:0;width:4.5px;height:23px;background:#3a6090;border-radius:0 4px 4px 0"></div><div class="a" style="left:0;bottom:0;width:3px;height:3px;background:#555"></div></div>
<div class="t" style="left:-2px;width:10px;text-align:right;top:495.7px;font-size:16px;color:#e6e6e6">6</div>
<div class="a" style="left:28px;top:497.0px;width:42px;height:23px;border-radius:4px;background:#fff;overflow:hidden;filter:saturate(.75) blur(.25px)"><div class="a" style="left:4px;top:9px;width:18px;height:9px;background:#3a70b0"></div><div class="a" style="left:26px;top:8px;width:7px;height:10px;background:#2a60a8"></div><div class="a" style="right:0;top:0;width:4.5px;height:23px;background:#3a6090;border-radius:0 4px 4px 0"></div><div class="a" style="left:0;bottom:0;width:3px;height:3px;background:#555"></div></div>
<div class="t" style="left:-2px;width:10px;text-align:right;top:545.3px;font-size:16px;color:#e6e6e6">7</div>
<div class="a" style="left:28px;top:546.6px;width:42px;height:23px;border-radius:4px;background:#fff;overflow:hidden;filter:saturate(.75) blur(.25px)"><div class="a" style="left:4px;top:9px;width:30px;height:9px;background:#111"></div><div class="a" style="left:6px;top:10px;width:7px;height:7px;background:#b8d030"></div><div class="a" style="left:16px;top:10px;width:16px;height:7px;background:#a8c040"></div><div class="a" style="right:0;top:0;width:4.5px;height:23px;background:#3a6090;border-radius:0 4px 4px 0"></div><div class="a" style="left:0;bottom:0;width:3px;height:3px;background:#555"></div></div>
<div class="t" style="left:-2px;width:10px;text-align:right;top:594.9px;font-size:16px;color:#e6e6e6">8</div>
<div class="a" style="left:28px;top:596.2px;width:42px;height:23px;border-radius:4px;background:#fff;overflow:hidden;filter:saturate(.75) blur(.25px)"><div class="a" style="left:5px;top:6px;width:28px;height:9px;background:#4a80d0"></div><div class="a" style="left:9px;top:16px;width:20px;height:3px;background:#8a60c0"></div><div class="a" style="right:0;top:0;width:4.5px;height:23px;background:#3a6090;border-radius:0 4px 4px 0"></div><div class="a" style="left:0;bottom:0;width:3px;height:3px;background:#555"></div></div>
<div class="t" style="left:-2px;width:10px;text-align:right;top:644.5px;font-size:16px;color:#e6e6e6">9</div>
<div class="a" style="left:28px;top:645.8px;width:42px;height:23px;border-radius:4px;background:#fff;overflow:hidden;filter:saturate(.75) blur(.25px)"><div class="a" style="left:7px;top:6px;width:25px;height:14px;background:#111"></div><div class="a" style="left:9px;top:8px;width:4px;height:4px;background:#e8e020"></div><div class="a" style="left:15px;top:8px;width:4px;height:4px;background:#40c0c0"></div><div class="a" style="left:21px;top:8px;width:4px;height:4px;background:#d02070"></div><div class="a" style="left:27px;top:8px;width:4px;height:4px;background:#60d040"></div><div class="a" style="left:9px;top:14px;width:4px;height:4px;background:#c080c0"></div><div class="a" style="left:15px;top:14px;width:4px;height:4px;background:#40a0d0"></div><div class="a" style="left:21px;top:14px;width:4px;height:4px;background:#a060d0"></div><div class="a" style="left:27px;top:14px;width:4px;height:4px;background:#a02020"></div><div class="a" style="right:0;top:0;width:4.5px;height:23px;background:#3a6090;border-radius:0 4px 4px 0"></div><div class="a" style="left:0;bottom:0;width:3px;height:3px;background:#555"></div></div>
<div class="t" style="left:-2px;width:10px;text-align:right;top:694.1px;font-size:16px;color:#e6e6e6">0</div>
<div class="a" style="left:28px;top:695.4px;width:42px;height:23px;border-radius:4px;background:#fff;overflow:hidden;filter:saturate(.75) blur(.25px)"><div class="a" style="left:8px;top:6px;width:22px;height:1px;background:#bba"></div><div class="a" style="left:8px;top:10px;width:4px;height:4px;background:#2a50a0"></div><div class="a" style="left:14px;top:10px;width:4px;height:4px;background:#8a5040"></div><div class="a" style="left:20px;top:10px;width:4px;height:4px;background:#9060c0"></div><div class="a" style="left:26px;top:10px;width:4px;height:4px;background:#40a050"></div><div class="a" style="left:8px;top:15px;width:4px;height:4px;background:#c01020"></div><div class="a" style="left:14px;top:15px;width:4px;height:4px;background:#104050"></div><div class="a" style="left:20px;top:15px;width:4px;height:4px;background:#3020a0"></div><div class="a" style="left:26px;top:15px;width:4px;height:4px;background:#d0c030"></div><div class="a" style="right:0;top:0;width:4.5px;height:23px;background:#3a6090;border-radius:0 4px 4px 0"></div><div class="a" style="left:0;bottom:0;width:3px;height:3px;background:#555"></div></div>
<svg class="a" style="left:0;top:744.5px" width="9" height="13" fill="none" stroke="#e6e6e6" stroke-width="1.35"><path d="M5.2 0.6 V12 M5.2 0.8 L1.6 3.4"/></svg>
<div class="a" style="left:28px;top:745.0px;width:42px;height:23px;border-radius:4px;background:#fff;overflow:hidden;filter:saturate(.75) blur(.25px)"><div class="a" style="left:5px;top:4px;width:28px;height:3px;background:#c8a0a0"></div><div class="a" style="left:5px;top:9px;width:12px;height:8px;background:#a0b0d0"></div><div class="a" style="left:20px;top:9px;width:12px;height:9px;background:#d8c0a0"></div><div class="a" style="right:0;top:0;width:4.5px;height:23px;background:#3a6090;border-radius:0 4px 4px 0"></div><div class="a" style="left:0;bottom:0;width:3px;height:3px;background:#555"></div></div>
<div class="t" style="left:-2px;width:10px;text-align:right;top:793.3px;font-size:16px;color:#e6e6e6">2</div>
<div class="a" style="left:28px;top:794.6px;width:42px;height:23px;border-radius:4px;background:#fff;overflow:hidden;filter:saturate(.75) blur(.25px)"><div class="a" style="left:8px;top:4px;width:20px;height:1px;background:#bbb"></div><div class="a" style="left:14px;top:8px;width:8px;height:9px;background:#e070b0"></div><div class="a" style="right:0;top:0;width:4.5px;height:23px;background:#3a6090;border-radius:0 4px 4px 0"></div><div class="a" style="left:0;bottom:0;width:3px;height:3px;background:#555"></div></div>
<div class="t" style="left:-2px;width:10px;text-align:right;top:842.9px;font-size:16px;color:#e6e6e6">3</div>
<div class="a" style="left:28px;top:844.2px;width:42px;height:23px;border-radius:4px;background:#fff;overflow:hidden;filter:saturate(.75) blur(.25px)"><div class="a" style="left:6px;top:7px;width:10px;height:4px;background:#c04050"></div><div class="a" style="left:20px;top:7px;width:10px;height:4px;background:#3050a0"></div><div class="a" style="left:7px;top:13px;width:8px;height:3px;background:#999"></div><div class="a" style="left:21px;top:13px;width:8px;height:3px;background:#999"></div><div class="a" style="right:0;top:0;width:4.5px;height:23px;background:#3a6090;border-radius:0 4px 4px 0"></div><div class="a" style="left:0;bottom:0;width:3px;height:3px;background:#555"></div></div>
<div class="t" style="left:-2px;width:10px;text-align:right;top:892.5px;font-size:16px;color:#e6e6e6">4</div>
<div class="a" style="left:28px;top:893.8px;width:42px;height:23px;border-radius:4px;background:#fff;overflow:hidden;filter:saturate(.75) blur(.25px)"><div class="a" style="left:6px;top:7px;width:10px;height:4px;background:#6040a0"></div><div class="a" style="left:20px;top:7px;width:10px;height:4px;background:#111"></div><div class="a" style="left:7px;top:13px;width:8px;height:3px;background:#999"></div><div class="a" style="left:21px;top:13px;width:8px;height:3px;background:#999"></div><div class="a" style="right:0;top:0;width:4.5px;height:23px;background:#3a6090;border-radius:0 4px 4px 0"></div><div class="a" style="left:0;bottom:0;width:3px;height:3px;background:#555"></div></div>
<div class="t" style="left:-2px;width:10px;text-align:right;top:942.1px;font-size:16px;color:#e6e6e6">5</div>
<div class="a" style="left:28px;top:943.4px;width:42px;height:23px;border-radius:4px;background:#fff;overflow:hidden;filter:saturate(.75) blur(.25px)"><div class="a" style="left:6px;top:7px;width:10px;height:4px;background:#d8c040"></div><div class="a" style="left:20px;top:7px;width:10px;height:4px;background:#40a060"></div><div class="a" style="left:7px;top:13px;width:8px;height:3px;background:#999"></div><div class="a" style="left:21px;top:13px;width:8px;height:3px;background:#999"></div><div class="a" style="right:0;top:0;width:4.5px;height:23px;background:#3a6090;border-radius:0 4px 4px 0"></div><div class="a" style="left:0;bottom:0;width:3px;height:3px;background:#555"></div></div>
<div class="t" style="left:-2px;width:10px;text-align:right;top:991.7px;font-size:16px;color:#e6e6e6">6</div>
<div class="a" style="left:28px;top:993.0px;width:42px;height:23px;border-radius:4px;background:#fff;overflow:hidden;filter:saturate(.75) blur(.25px)"><div class="a" style="left:6px;top:7px;width:10px;height:4px;background:#e060c0"></div><div class="a" style="left:20px;top:7px;width:10px;height:4px;background:#e0a070"></div><div class="a" style="left:7px;top:13px;width:8px;height:3px;background:#999"></div><div class="a" style="left:21px;top:13px;width:8px;height:3px;background:#999"></div><div class="a" style="right:0;top:0;width:4.5px;height:23px;background:#3a6090;border-radius:0 4px 4px 0"></div><div class="a" style="left:0;bottom:0;width:3px;height:3px;background:#555"></div></div>
<div class="a" style="left:23px;top:244px;width:51px;height:33px;border:3px solid #e8907e;border-radius:7px"></div>
<svg class="a" style="left:96px;top:229px" width="16" height="12"><path d="M2 10 L8 2.5 L14 10z" fill="#d8d8d8"/></svg>
<div class="a" style="left:98.5px;top:245px;width:10px;height:420px;border-radius:5px;background:#c8c8c8"></div>
<svg class="a" style="left:96px;top:1017px" width="16" height="12"><path d="M2 2 L8 9.5 L14 2z" fill="#d8d8d8"/></svg>
<!-- right scrollbar arrows -->
<svg class="a" style="left:1751px;top:229px" width="16" height="12"><path d="M2.5 10 L8.5 2.5 L14.5 10z" fill="#d8d8d8"/></svg>
<div class="a" style="left:1754px;top:245px;width:10px;height:23px;border-radius:5px;background:#c8c8c8"></div>
<svg class="a" style="left:1751px;top:907px" width="16" height="12"><path d="M2.5 2 L8.5 9.5 L14.5 2z" fill="#d8d8d8"/></svg>
<svg class="a" style="left:1751px;top:925px" width="16" height="40"><path d="M2.5 9 L8.5 1.5 L14.5 9z M2.5 16 L8.5 8.5 L14.5 16z M2.5 24 L8.5 31.5 L14.5 24z M2.5 31 L8.5 38.5 L14.5 31z" fill="#d8d8d8"/></svg>

<!-- ===== NOTES + STATUS ===== -->
<div class="t" style="left:130px;top:1001px;font-size:17.5px;color:#e2e2e2;letter-spacing:0.2px">Нотатки до слайда</div>
<div class="t" style="left:0;top:1042.5px;font-size:12px;color:#e0e0e0">Слайд 1 з 29</div>
<div class="t" style="left:111px;top:1042.5px;font-size:12px;color:#e0e0e0;font-weight:700;letter-spacing:-0.1px">українська</div>
<svg class="a" style="left:195px;top:1038px" width="20" height="19" fill="none" stroke="#e0e0e0" stroke-width="1.3"><circle cx="8" cy="3" r="2"/><path d="M2 6 q6 2 12 0 M8 7 v5 l-3 5 M8 12 l2 3"/><path d="M11 15 l2.5 2.5 l5 -6"/></svg>
<div class="t" style="left:218px;top:1042px;font-size:13px;color:#e0e0e0;letter-spacing:0.15px">Спеціальні можливості: усе добре</div>
<svg class="a" style="left:1232px;top:1036px" width="24" height="23" fill="none" stroke="#e6e6e6" stroke-width="1.5"><path d="M6 6 l4 -4 l4 4"/><path d="M1 12 h20 M1 16.5 h20 M1 21 h20"/></svg>
<div class="t" style="left:1256px;top:1042.5px;font-size:12.5px;color:#e6e6e6;font-weight:700;letter-spacing:-0.3px">Нотатки</div>
<div class="a" style="left:1327px;top:1034px;width:50px;height:26px;background:#585858"></div>
<svg class="a" style="left:1342px;top:1038px" width="22" height="19" fill="none" stroke="#e6e6e6" stroke-width="1.4"><rect x="1.5" y="1.5" width="18" height="15"/><path d="M5 1.5 v12 h14.5"/><rect x="9" y="5" width="7" height="4"/></svg>
<svg class="a" style="left:1391px;top:1038px" width="22" height="19" fill="none" stroke="#e6e6e6" stroke-width="1.4"><rect x="2" y="2" width="6.5" height="5.5"/><rect x="12" y="2" width="6.5" height="5.5"/><rect x="2" y="11" width="6.5" height="5.5"/><rect x="12" y="11" width="6.5" height="5.5"/></svg>
<svg class="a" style="left:1441px;top:1038px" width="22" height="19" fill="none" stroke="#e6e6e6" stroke-width="1.4"><path d="M1.5 3 q4 -2 9 0 v14 q-5 -2 -9 0z M10.5 3 q5 -2 9 0 v14 q-4 -2 -9 0z"/><path d="M4 7 h4 M4 10 h4 M13 7 h4 M13 10 h4" stroke-width="1"/></svg>
<svg class="a" style="left:1490px;top:1036px" width="22" height="21" fill="none" stroke="#e6e6e6" stroke-width="1.4"><path d="M2 2.5 h17 M3.5 2.5 v9 h14 v-9"/><path d="M10.5 11.5 v6 M6 18.5 h9"/><path d="M7.5 6 h6" stroke-width="1.6"/></svg>
<div class="a" style="left:1533px;top:1047px;width:9px;height:1.5px;background:#bdbdbd"></div>
<div class="a" style="left:1550px;top:1047px;width:123px;height:1.5px;background:#bdbdbd"></div>
<div class="a" style="left:1611px;top:1043px;width:1.5px;height:9px;background:#bdbdbd"></div>
<div class="a" style="left:1597px;top:1040px;width:7px;height:15px;background:#d0d0d0"></div>
<svg class="a" style="left:1678px;top:1040px" width="13" height="14" fill="none" stroke="#cfcfcf" stroke-width="1.4"><path d="M6.5 1 v12 M0.5 7 h12"/></svg>
<div class="t" style="left:1704px;top:1041px;font-size:13px;color:#e2e2e2">83%</div>
<svg class="a" style="left:1744px;top:1037px" width="22" height="20" fill="none" stroke="#e6e6e6" stroke-width="1.4"><rect x="6.5" y="5.5" width="8" height="8"/><path d="M8.5 3 l2 -2 l2 2 M8.5 16.5 l2 2 l2 -2 M3.5 7.5 l-2 2 l2 2 M17.5 7.5 l2 2 l-2 2"/></svg>

<!-- bottom strip -->
<div class="a" style="left:0;top:1100px;width:2022px;height:14px;background:#171717;overflow:hidden"><div class="a" style="left:261px;top:5px;width:28px;height:28px;border-radius:50%;background:radial-gradient(circle at 50% 35%,#2e2e2e,#1c1c1c 75%);box-shadow:inset 0 1.5px 1px #4a4a4a"></div></div>


<!-- ===== TEAMS PANEL ===== -->
<svg class="a" style="left:1770px;top:45px" width="252" height="150" viewBox="0 0 252 150">
  <defs><filter id="b1" x="-20%" y="-20%" width="140%" height="140%"><feGaussianBlur stdDeviation="2"/></filter>
  <filter id="b1s"><feGaussianBlur stdDeviation="0.9"/></filter>
  <filter id="tex1"><feTurbulence type="fractalNoise" baseFrequency=".12" numOctaves="2" seed="3"/><feColorMatrix values="0 0 0 0 .85  0 0 0 0 .82  0 0 0 0 .80  0 0 0 .35 0"/></filter>
  <linearGradient id="w1" x1="0" y1="0" x2="1" y2="0"><stop offset="0" stop-color="#d2cdca"/><stop offset=".5" stop-color="#dcd4d1"/><stop offset="1" stop-color="#d4d2cc"/></linearGradient>
  <linearGradient id="win1" x1="0" y1="0" x2="1" y2="0"><stop offset="0" stop-color="#e0f4f6"/><stop offset=".6" stop-color="#eef8f8"/><stop offset="1" stop-color="#d8e0e0"/></linearGradient></defs>
  <rect width="252" height="150" fill="url(#w1)"/>
  <rect width="252" height="150" filter="url(#tex1)" opacity=".6"/>
  <g filter="url(#b1)">
    <rect x="-5" y="-2" width="260" height="9" fill="#e6e2de"/>
    <rect x="-5" y="0" width="38" height="104" fill="url(#win1)"/>
    <rect x="32" y="0" width="6" height="104" fill="#c8caca"/>
    <rect x="29" y="1" width="10" height="9" fill="#4a4444"/>
    <path d="M-5 104 h42 l20 46 h-62z" fill="#c2cacb"/>
    <path d="M90 150 q-4 -60 8 -95 q10 -18 34 -18 q24 0 32 20 q14 30 8 93z" fill="#3d3432"/>
    <path d="M96 130 q-2 -40 8 -70 l6 -6 q-8 40 -6 80z" fill="#7a6a66"/>
    <path d="M36 150 q6 -34 56 -42 l24 -4 l16 14 l16 -14 l26 4 q48 8 52 42z" fill="#232222"/>
    <path d="M116 104 l16 16 l16 -16z" fill="#d8c6c6"/>
    <ellipse cx="132" cy="83" rx="22" ry="31" fill="#e8d3d3"/>
    <path d="M108 74 q2 -36 24 -36 q22 0 24 36 q-6 -24 -24 -24 q-18 0 -24 24z" fill="#3d3432"/>
    <path d="M110 150 q2 -20 0 -40 l6 -4 q4 24 2 44z M156 150 q-2 -20 0 -42 l-6 -4 q-4 24 -2 46z" fill="#3d3432"/>
  </g>
  <g filter="url(#b1s)">
    <path d="M119 83 q6 -2 11 1 M135 84 q5 -3 11 -1" stroke="#3a2e2e" stroke-width="2.4" fill="none"/>
    <path d="M129 85 v-0" stroke="#000"/>
    <path d="M126 105 q6 2 12 0" stroke="#b88888" stroke-width="1.6" fill="none"/>
    <path d="M121 78 q5 -3 9 -1 M136 77 q5 -2 9 1" stroke="#8a7070" stroke-width="1" fill="none"/>
  </g>
</svg>
<div class="t" style="left:1784px;top:258.5px;font-size:18px;color:#f0f0f0">Лубенець Вікторія Михай...</div>

<svg class="a" style="left:1770px;top:374px" width="252" height="149" viewBox="0 0 252 149">
  <defs><filter id="b2" x="-20%" y="-20%" width="140%" height="140%"><feGaussianBlur stdDeviation="1.8"/></filter><filter id="b2g" x="-20%" y="-50%" width="140%" height="200%"><feGaussianBlur stdDeviation=".55"/></filter></defs>
  <rect width="252" height="149" fill="#e4dcd2"/>
  <g filter="url(#b2)">
    <rect x="-5" y="-5" width="50" height="160" fill="#e2e0da"/>
    <rect x="45" y="-5" width="47" height="160" fill="#e8e6e0"/>
    <rect x="92" y="10" width="150" height="140" fill="#e7ddd3"/>
    <rect x="240" y="-5" width="20" height="160" fill="#ebe7e1"/>
    <rect x="-5" y="-5" width="50" height="15" fill="#b4aca4"/>
    <rect x="92" y="-5" width="152" height="15" fill="#9a8a7c"/>
    <path d="M72 149 q4 -26 40 -32 q25 -4 50 0 q34 6 38 32z" fill="#6a2150"/>
    <path d="M106 130 q-6 -40 4 -62 q10 -18 26 -18 q18 0 26 20 q8 24 2 60 q-10 -10 -28 -10 q-18 0 -30 10z" fill="#4a4038"/>
    <ellipse cx="135" cy="94" rx="20" ry="26" fill="#e8dad6"/>
    <path d="M113 84 q0 -30 23 -30 q23 0 23 30 q-8 -14 -23 -14 q-15 0 -23 14z" fill="#4a4038"/>
    <path d="M38 149 q5 -20 15 -25 q10 5 18 25z" fill="#8aa050"/>
    <rect x="3" y="137" width="22" height="12" fill="#707478"/>
    <rect x="30" y="140" width="6" height="9" fill="#2040b0"/>
    <path d="M230 149 q5 -25 10 -32 q6 10 8 32z" fill="#a8b050"/>
  </g>
  <g filter="url(#b2g)"><path d="M115 79 h17 v8 q-8 4 -17 0z M137 79 h17 v8 q-8 4 -17 0z M132 81 h5" fill="none" stroke="#161616" stroke-width="2.8"/></g>
  <path d="M130 102 q5 2 10 0" stroke="#b8908a" stroke-width="1.5" fill="none"/>
</svg>

<div class="a" style="left:1778px;top:581px;width:229px;height:28px;border-radius:3px;background:#6264a7"></div>
<div class="t" style="left:1783.5px;top:586px;font-size:17.5px;color:#fff;letter-spacing:0.3px">Нітченко Алла Григорівна</div>

<svg class="a" style="left:1806px;top:617px" width="187" height="328" viewBox="0 0 187 328">
  <defs><filter id="b3" x="-20%" y="-20%" width="140%" height="140%"><feGaussianBlur stdDeviation="3"/></filter>
  <filter id="b3s"><feGaussianBlur stdDeviation="1.2"/></filter>
  <linearGradient id="g3" x1="0" y1="0" x2="1" y2="0"><stop offset="0" stop-color="#c4c4c2"/><stop offset=".3" stop-color="#dcd8d0"/><stop offset="1" stop-color="#e6dfd2"/></linearGradient></defs>
  <rect width="187" height="328" fill="url(#g3)"/>
  <g filter="url(#b3)">
    <rect x="-5" y="-5" width="40" height="200" fill="#c0c0c0"/>
    <rect x="60" y="-5" width="80" height="60" fill="#ece8e0"/>
    <rect x="150" y="100" width="40" height="120" fill="#e0c8b8"/>
    <path d="M-5 328 v-115 q20 -20 60 -28 q30 -6 60 -6 q40 2 75 28 v121z" fill="#9a9896"/><path d="M70 200 q30 10 60 0 l-6 90 q-24 12 -48 0z" fill="#c8b8ae"/><path d="M120 205 q20 30 14 80" stroke="#3a3838" stroke-width="12" fill="none"/>
    <path d="M58 150 q-10 -60 6 -90 q16 -28 40 -28 q30 0 42 30 q10 30 0 88 q-10 -40 -40 -50 q-30 0 -48 50z" fill="#3a3230"/><path d="M140 140 q6 30 12 60 q4 10 -2 14" stroke="#3a3230" stroke-width="6" fill="none"/>
    <ellipse cx="101" cy="130" rx="40" ry="60" fill="#d8c8c0"/>
    <path d="M80 180 q20 20 44 0 l6 60 q-30 20 -56 0z" fill="#d4c4bc"/>
    <path d="M60 110 q4 -50 42 -50 q38 0 42 50 q-14 -30 -42 -30 q-28 0 -42 30z" fill="#3a3230"/>
    <path d="M10 328 v-70 q20 -40 40 -45 l14 115z M180 328 v-75 q-20 -40 -40 -50 l-10 125z" fill="#9c9c9a"/>
  </g>
  <g filter="url(#b3s)">
    <path d="M77 116 q10 -4 20 0 M109 116 q10 -4 20 0" stroke="#4a4040" stroke-width="2.2" fill="none"/><ellipse cx="88" cy="126" rx="5" ry="2.2" fill="#5a4a48"/><ellipse cx="119" cy="126" rx="5" ry="2.2" fill="#5a4a48"/>
    <path d="M91 168 q10 4 20 0" stroke="#a07878" stroke-width="2.5" fill="none"/>
    <path d="M120 250 q-10 20 0 60" stroke="#3a3a3a" stroke-width="6" fill="none"/>
  </g>
  <rect x="0" y="296" width="187" height="28" fill="rgba(0,0,0,.6)"/>
</svg>
<div class="t" style="left:1784px;top:919px;font-size:17.5px;color:#f4f4f4;letter-spacing:0.05px">Сущик Анастасія Андріївна</div>

<div class="a" style="left:1804px;top:991px;width:74px;height:74px;border-radius:50%;background:#f7d6dd;overflow:hidden"><div class="a" style="left:0;top:64px;width:74px;height:10px;background:#8a7078"></div></div>
<div class="t" style="left:1823px;top:1014px;font-size:28px;font-weight:700;color:#8b2446;letter-spacing:-0.5px">PB</div>
<div class="a" style="left:1921px;top:991px;width:74px;height:74px;border-radius:50%;background:#4a4f86"></div>
<div class="t" style="left:1943px;top:1019px;font-size:19px;font-weight:700;color:#fff;letter-spacing:-0.8px">+12</div>
<div class="t" style="left:1797px;top:1060px;font-size:17px;color:#f0f0f0">Рень Ма...</div>

<!-- bottom-left name label -->
<div class="a" style="left:-4px;top:1076px;width:225px;height:28px;border-radius:4px;background:#6264a7"></div>
<div class="t" style="left:0;top:1081px;font-size:18px;color:#fff">Нітченко Алла Григорівна</div>
<div class="a" style="left:0;top:1100px;width:221px;height:4px;background:rgba(20,20,20,.35);border-radius:0 0 4px 0"></div>

<!-- mouse cursor -->
<svg class="a" style="left:651px;top:15px" width="24" height="26" viewBox="0 0 24 26"><path d="M1.5 1.5 V20 L6 15.5 L9.5 23 L12.5 21.5 L9 14.5 H15.5z" fill="#fff" stroke="#000" stroke-width="1.2"/></svg>

</div>
</body></html>
